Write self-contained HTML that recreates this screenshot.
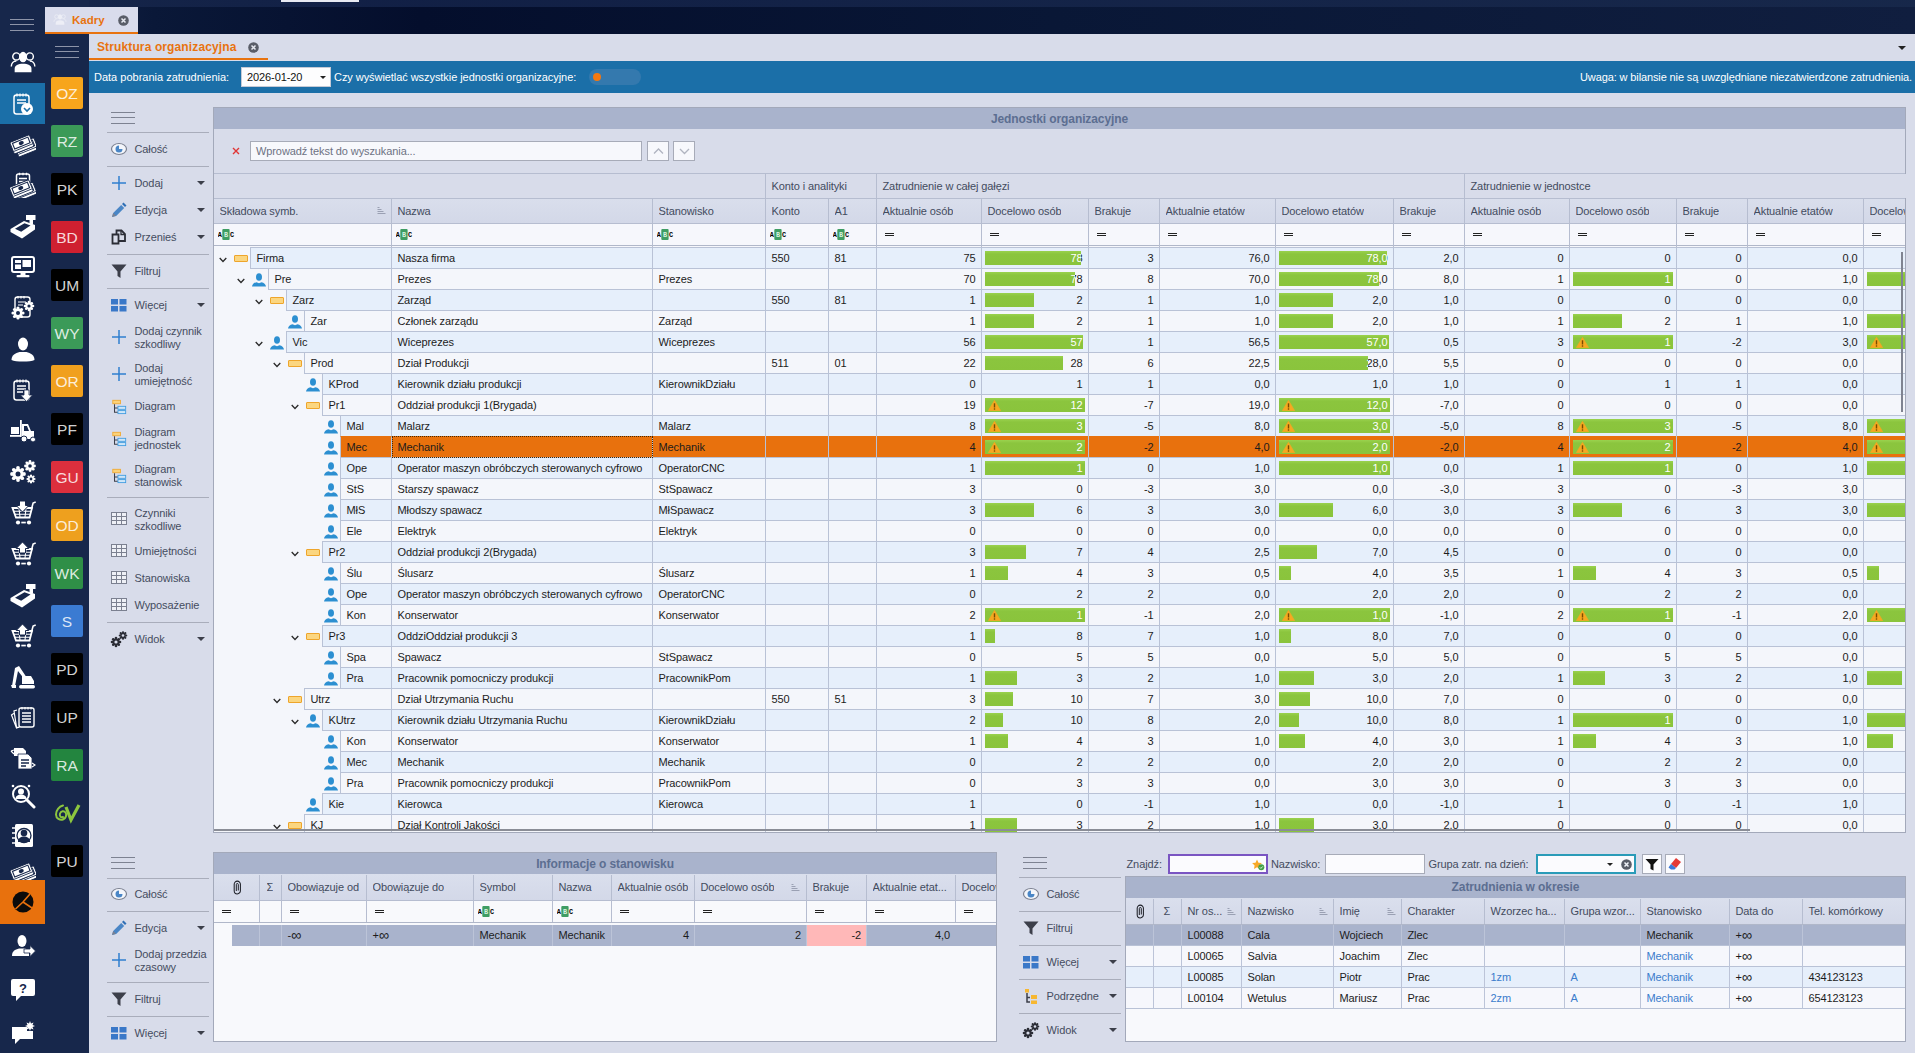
<!DOCTYPE html>
<html lang="pl"><head><meta charset="utf-8"><title>Struktura organizacyjna</title>
<style>
*{box-sizing:border-box;margin:0;padding:0}
html,body{width:1915px;height:1053px;overflow:hidden}
body{position:relative;background:#d8dcea;font-family:"Liberation Sans",sans-serif;font-size:11px;color:#1c1c1c;line-height:13px;letter-spacing:-0.1px}
.a{position:absolute}
.t{position:absolute;white-space:nowrap;line-height:13px}
.nav{background:#17274b}
.sq{position:absolute;left:51px;width:32px;height:32px;border-radius:2px;color:#fff;font-size:15.500px;line-height:34px;text-align:center;color:rgba(255,255,255,.84);letter-spacing:0}
.ico{position:absolute;left:10px;width:26px;height:26px}
.sep{position:absolute;height:1px;background:#a9adbb}
.tb{position:absolute;white-space:nowrap;color:#454c60;line-height:13px}
.hl{position:absolute;height:1px;background:#7d8291}
.arr{position:absolute;width:0;height:0;border-left:4px solid transparent;border-right:4px solid transparent;border-top:4px solid #3c3f4a}
.hdr{position:absolute;color:#434b5e;white-space:nowrap;line-height:13px}
.vl{position:absolute;width:1px;background:#b6bdd0}
.hz{position:absolute;height:1px;background:#b6bdd0}
.row{position:absolute;left:0;height:21px}
.c{position:absolute;top:0;height:21px;line-height:20px;white-space:nowrap;overflow:hidden;border-right:1px solid #b9c2d6;border-bottom:1px solid #b9c2d6}
.r{text-align:right;padding-right:5.500px}
.l{padding-left:5px}
.bar{position:absolute;top:3px;height:14px;background:linear-gradient(#9ad24e,#8bc53e 22%,#8ac43c);overflow:hidden}
.bar span{position:absolute;top:-3px;color:#fff;text-align:right;line-height:20px}
.o{background:#e6effb}
.e{background:#f4f6fb}
.sel{background:#e8710d}
.title{position:absolute;background:#a9b3cc;color:#5c6e91;font-weight:bold;text-align:center;font-size:12px;line-height:22px;height:21px}
.eq{position:absolute;width:9px;height:3px;border-top:1px solid #222;border-bottom:1px solid #222}
.lnk{color:#3b7ccc}
</style></head>
<body>
<div class="a" style="left:0;top:0;width:1915px;height:34px;background:linear-gradient(90deg,#17274b 0,#0a1838 8%,#040e2c 22%,#091736 55%,#101e3f 100%)"></div>
<div class="a" style="left:0;top:0;width:1915px;height:7px;background:linear-gradient(90deg,#17274b 0,#14234a 20%,#18294c 100%);opacity:.85"></div>
<div class="a" style="left:281px;top:0;width:78px;height:2px;background:#e8eaf2"></div>
<div class="a nav" style="left:0;top:0;width:89px;height:1053px"></div>
<div class="a" style="left:10px;top:19px;width:24px;height:1px;background:#8d94a8"></div>
<div class="a" style="left:10px;top:24.25px;width:24px;height:1px;background:#8d94a8"></div>
<div class="a" style="left:10px;top:29.5px;width:24px;height:1px;background:#8d94a8"></div>
<div class="a" style="left:55px;top:46px;width:24px;height:1px;background:#8d94a8"></div>
<div class="a" style="left:55px;top:51.25px;width:24px;height:1px;background:#8d94a8"></div>
<div class="a" style="left:55px;top:56.5px;width:24px;height:1px;background:#8d94a8"></div>
<div class="a" style="left:0;top:83px;width:45px;height:41px;background:#1b6fa8"></div>
<svg class="ico" style="top:49px" viewBox="0 0 26 26"><g transform="translate(-1.500,-1.500) scale(1.120)"><circle cx="7" cy="8" r="3.2" fill="none" stroke="#fff" stroke-width="1.3"/><circle cx="19" cy="8" r="3.2" fill="none" stroke="#fff" stroke-width="1.3"/><path d="M2.5 17c0-3 2-5 4.5-5M23.5 17c0-3-2-5-4.5-5" fill="none" stroke="#fff" stroke-width="1.3"/><ellipse cx="13" cy="8.5" rx="3.6" ry="4.6" fill="#fff"/><path d="M5.5 22v-3c0-3 3-4.5 7.500-4.500s7.500 1.500 7.500 4.500v3z" fill="#fff"/></g></svg>
<svg class="ico" style="top:91px" viewBox="0 0 26 26"><rect x="4" y="4" width="15" height="19" rx="2.500" fill="none" stroke="#fff" stroke-width="1.5"/><path d="M7 2.500v3M10 2.500v3M13 2.500v3M16 2.500v3" stroke="#fff" stroke-width="1.2"/><path d="M7 9h9M7 12h9" stroke="#fff" stroke-width="1.5"/><circle cx="17" cy="18" r="6" fill="#fff"/><path d="M14 17l3 3 3-3" fill="none" stroke="#1b6fa8" stroke-width="1.600"/></svg>
<svg class="ico" style="top:131px" viewBox="0 0 26 26"><g transform="translate(0,0)"><g transform="translate(4.5,3.5) rotate(-22 12 12)"><rect x="1" y="6.500" width="21" height="12.500" rx="1" fill="#fff" stroke="#17274b" stroke-width=".9"/><rect x="3.200" y="8.300" width="16.600" height="6" fill="none" stroke="#17274b" stroke-width="1.100"/><ellipse cx="11.500" cy="11.300" rx="2.600" ry="1.900" fill="#17274b"/><path d="M1.500 16.300h20" stroke="#17274b" stroke-width=".8"/></g><g transform="translate(0,0.5) rotate(-22 12 12)"><rect x="1" y="6.500" width="21" height="12.500" rx="1" fill="#fff" stroke="#17274b" stroke-width=".9"/><rect x="3.200" y="8.300" width="16.600" height="6" fill="none" stroke="#17274b" stroke-width="1.100"/><ellipse cx="11.500" cy="11.300" rx="2.600" ry="1.900" fill="#17274b"/><path d="M1.500 16.300h20" stroke="#17274b" stroke-width=".8"/></g></g></svg>
<svg class="ico" style="top:172px" viewBox="0 0 26 26"><rect x="6.500" y="2" width="13" height="12" rx="2" fill="none" stroke="#fff" stroke-width="1.500"/><path d="M9.500 0.800v2.500M13 0.800v2.500M16.500 0.800v2.500M9 6.500h8M9 9.500h8" stroke="#fff" stroke-width="1.300"/><g transform="translate(3.5,7) rotate(-22 12 12)"><rect x="1" y="6.500" width="21" height="12.500" rx="1" fill="#fff" stroke="#17274b" stroke-width=".9"/><rect x="3.200" y="8.300" width="16.600" height="6" fill="none" stroke="#17274b" stroke-width="1.100"/><ellipse cx="11.500" cy="11.300" rx="2.600" ry="1.900" fill="#17274b"/><path d="M1.500 16.300h20" stroke="#17274b" stroke-width=".8"/></g><g transform="translate(-0.5,4.5) rotate(-22 12 12)"><rect x="1" y="6.500" width="21" height="12.500" rx="1" fill="#fff" stroke="#17274b" stroke-width=".9"/><rect x="3.200" y="8.300" width="16.600" height="6" fill="none" stroke="#17274b" stroke-width="1.100"/><ellipse cx="11.500" cy="11.300" rx="2.600" ry="1.900" fill="#17274b"/><path d="M1.500 16.300h20" stroke="#17274b" stroke-width=".8"/></g></svg>
<svg class="ico" style="top:213px" viewBox="0 0 26 26"><path d="M0.500 16l13.500-8 11 4v4.500l-13 9-11.500-6.500z" fill="#fff"/><path d="M5 15.800l9.500-5.500 6 2.300-9.300 6.200z" fill="#17274b"/><rect x="16" y="2" width="9.500" height="5" fill="#fff"/><rect x="19.500" y="6" width="3.500" height="5.500" fill="#fff"/></svg>
<svg class="ico" style="top:254px" viewBox="0 0 26 26"><rect x="2" y="3" width="22" height="15" rx="2" fill="#17274b" stroke="#fff" stroke-width="2"/><rect x="5" y="6" width="6" height="3" fill="#fff"/><rect x="5" y="10.500" width="6" height="4.500" fill="#fff"/><rect x="12.500" y="6" width="8.500" height="7" fill="#fff"/><rect x="10.500" y="18.500" width="5" height="3" fill="#fff"/><rect x="6.500" y="21" width="13" height="2.200" rx="1" fill="#fff"/></svg>
<svg class="ico" style="top:295px" viewBox="0 0 26 26"><rect x="5" y="2" width="15" height="20" rx="2.500" fill="none" stroke="#fff" stroke-width="1.4"/><path d="M8 1v2.500M11 1v2.500M14 1v2.500M8 7h8M8 10h5" stroke="#fff" stroke-width="1.2"/><circle cx="13.0" cy="18.0" r="1.6" fill="#fff"/><circle cx="11.5" cy="21.5" r="1.6" fill="#fff"/><circle cx="8.0" cy="23.0" r="1.6" fill="#fff"/><circle cx="4.5" cy="21.5" r="1.6" fill="#fff"/><circle cx="3.0" cy="18.0" r="1.6" fill="#fff"/><circle cx="4.5" cy="14.5" r="1.6" fill="#fff"/><circle cx="8.0" cy="13.0" r="1.6" fill="#fff"/><circle cx="11.5" cy="14.5" r="1.6" fill="#fff"/><circle cx="8" cy="18" r="4.5" fill="#fff"/><circle cx="8" cy="18" r="2" fill="#17274b"/><circle cx="23.0" cy="11.0" r="1.3" fill="#fff"/><circle cx="21.8" cy="13.8" r="1.3" fill="#fff"/><circle cx="19.0" cy="15.0" r="1.3" fill="#fff"/><circle cx="16.2" cy="13.8" r="1.3" fill="#fff"/><circle cx="15.0" cy="11.0" r="1.3" fill="#fff"/><circle cx="16.2" cy="8.2" r="1.3" fill="#fff"/><circle cx="19.0" cy="7.0" r="1.3" fill="#fff"/><circle cx="21.8" cy="8.2" r="1.3" fill="#fff"/><circle cx="19" cy="11" r="3.6" fill="#fff"/><circle cx="19" cy="11" r="1.6" fill="#17274b"/></svg>
<svg class="ico" style="top:336px" viewBox="0 0 26 26"><ellipse cx="13" cy="8" rx="5" ry="6.500" fill="#fff"/><path d="M1.500 24c0-5 4-7 8-8h7c4 1 8 3 8 8-4 2-19 2-23 0z" fill="#fff"/></svg>
<svg class="ico" style="top:377px" viewBox="0 0 26 26"><rect x="4" y="4" width="15" height="19" rx="2.500" fill="none" stroke="#fff" stroke-width="1.5"/><path d="M7 2.500v3M10 2.500v3M13 2.500v3M16 2.500v3" stroke="#fff" stroke-width="1.2"/><path d="M7 9h9M7 12h9" stroke="#fff" stroke-width="1.5"/><path d="M7 15h6" stroke="#fff" stroke-width="1.500"/><path d="M14 13h5v5h3.500l-6 6.500-6-6.500h3.500z" fill="#fff" stroke="#17274b" stroke-width=".8"/></svg>
<svg class="ico" style="top:418px" viewBox="0 0 26 26"><rect x="1" y="9" width="8" height="7" fill="#fff"/><rect x="0" y="17" width="11" height="1.800" fill="#fff"/><rect x="10" y="2" width="1.800" height="17" fill="#fff"/><path d="M12 6h6l3 7h3v8h-12z" fill="#fff"/><path d="M14 8h3l2 5h-5z" fill="#17274b"/><circle cx="14" cy="21" r="3" fill="#fff" stroke="#17274b"/><circle cx="23" cy="21.500" r="2.500" fill="#fff" stroke="#17274b"/></svg>
<svg class="ico" style="top:459px" viewBox="0 0 26 26"><circle cx="14.0" cy="15.0" r="1.9" fill="#fff"/><circle cx="12.2" cy="19.2" r="1.9" fill="#fff"/><circle cx="8.0" cy="21.0" r="1.9" fill="#fff"/><circle cx="3.8" cy="19.2" r="1.9" fill="#fff"/><circle cx="2.0" cy="15.0" r="1.9" fill="#fff"/><circle cx="3.8" cy="10.8" r="1.9" fill="#fff"/><circle cx="8.0" cy="9.0" r="1.9" fill="#fff"/><circle cx="12.2" cy="10.8" r="1.9" fill="#fff"/><circle cx="8" cy="15" r="5.4" fill="#fff"/><circle cx="8" cy="15" r="2.5" fill="#17274b"/><circle cx="24.5" cy="7.0" r="1.4" fill="#fff"/><circle cx="23.2" cy="10.2" r="1.4" fill="#fff"/><circle cx="20.0" cy="11.5" r="1.4" fill="#fff"/><circle cx="16.8" cy="10.2" r="1.4" fill="#fff"/><circle cx="15.5" cy="7.0" r="1.4" fill="#fff"/><circle cx="16.8" cy="3.8" r="1.4" fill="#fff"/><circle cx="20.0" cy="2.5" r="1.4" fill="#fff"/><circle cx="23.2" cy="3.8" r="1.4" fill="#fff"/><circle cx="20" cy="7" r="4.0" fill="#fff"/><circle cx="20" cy="7" r="1.8" fill="#17274b"/><circle cx="24.5" cy="20.0" r="1.1" fill="#fff"/><circle cx="23.5" cy="22.5" r="1.1" fill="#fff"/><circle cx="21.0" cy="23.5" r="1.1" fill="#fff"/><circle cx="18.5" cy="22.5" r="1.1" fill="#fff"/><circle cx="17.5" cy="20.0" r="1.1" fill="#fff"/><circle cx="18.5" cy="17.5" r="1.1" fill="#fff"/><circle cx="21.0" cy="16.5" r="1.1" fill="#fff"/><circle cx="23.5" cy="17.5" r="1.1" fill="#fff"/><circle cx="21" cy="20" r="3.1" fill="#fff"/><circle cx="21" cy="20" r="1.4" fill="#17274b"/></svg>
<svg class="ico" style="top:500px" viewBox="0 0 26 26"><path d="M2.500 8h19.500l-2.500 9.500h-13.500z" fill="none" stroke="#fff" stroke-width="1.800"/><path d="M21.500 9l1.600-6 2.600-1" stroke="#fff" stroke-width="1.600" fill="none"/><path d="M3.500 11.200h17.500M4.500 14.300h15.500M9 8.500l1 8.500M16 8.500l-1 8.500" stroke="#fff" stroke-width="1.100"/><path d="M9.500 1h6v4.500h3.300l-6.300 6.500-6.300-6.500h3.300z" fill="#fff" stroke="#17274b" stroke-width="1"/><circle cx="8" cy="22.500" r="2.100" fill="#fff"/><circle cx="19" cy="22.500" r="2.100" fill="#fff"/><rect x="11.300" y="21.700" width="4.500" height="1.700" fill="#fff"/></svg>
<svg class="ico" style="top:541px" viewBox="0 0 26 26"><path d="M2.500 8h19.500l-2.500 9.500h-13.500z" fill="none" stroke="#fff" stroke-width="1.800"/><path d="M21.500 9l1.600-6 2.600-1" stroke="#fff" stroke-width="1.600" fill="none"/><path d="M3.500 11.200h17.500M4.500 14.300h15.500M9 8.500l1 8.500M16 8.500l-1 8.500" stroke="#fff" stroke-width="1.100"/><path d="M12.500 1l6.300 6.500h-3.300v4.500h-6v-4.500h-3.300z" fill="#fff" stroke="#17274b" stroke-width="1"/><circle cx="8" cy="22.500" r="2.100" fill="#fff"/><circle cx="19" cy="22.500" r="2.100" fill="#fff"/><rect x="11.300" y="21.700" width="4.500" height="1.700" fill="#fff"/></svg>
<svg class="ico" style="top:582px" viewBox="0 0 26 26"><path d="M0.500 16l13.500-8 11 4v4.500l-13 9-11.500-6.500z" fill="#fff"/><path d="M5 15.800l9.500-5.500 6 2.300-9.300 6.200z" fill="#17274b"/><rect x="16" y="2" width="9.500" height="5" fill="#fff"/><rect x="19.500" y="6" width="3.500" height="5.500" fill="#fff"/></svg>
<svg class="ico" style="top:623px" viewBox="0 0 26 26"><path d="M2.500 8h19.500l-2.500 9.500h-13.500z" fill="none" stroke="#fff" stroke-width="1.800"/><path d="M21.500 9l1.600-6 2.600-1" stroke="#fff" stroke-width="1.600" fill="none"/><path d="M3.500 11.200h17.500M4.500 14.300h15.500M9 8.500l1 8.500M16 8.500l-1 8.500" stroke="#fff" stroke-width="1.100"/><path d="M12.500 1l6.300 6.500h-3.300v4.500h-6v-4.500h-3.300z" fill="#fff" stroke="#17274b" stroke-width="1"/><circle cx="8" cy="22.500" r="2.100" fill="#fff"/><circle cx="19" cy="22.500" r="2.100" fill="#fff"/><rect x="11.300" y="21.700" width="4.500" height="1.700" fill="#fff"/></svg>
<svg class="ico" style="top:664px" viewBox="0 0 26 26"><path d="M2 22l3-18 4-2 8 12-2 2-7-9-3 15z" fill="#fff"/><path d="M12 12h9l3 5v3h-12z" fill="#fff"/><rect x="9" y="21" width="16" height="3.500" rx="1.700" fill="#fff"/><path d="M1 21h5v3h-4z" fill="#fff"/></svg>
<svg class="ico" style="top:705px" viewBox="0 0 26 26"><rect x="9" y="3" width="15" height="19" rx="2" fill="#17274b" stroke="#fff" stroke-width="1.400"/><path d="M12 8h9M12 11h9M12 14h9M12 17h9" stroke="#fff" stroke-width="1.400"/><path d="M12 2v2.500M15 2v2.500M18 2v2.500M21 2v2.500" stroke="#fff" stroke-width="1.100"/><path d="M7 5l-3 1 2.500 16 3 .500M4.500 8l-3 2 5 13 3-1" fill="none" stroke="#fff" stroke-width="1.200"/></svg>
<svg class="ico" style="top:746px" viewBox="0 0 26 26"><path d="M4 2h9l3 3v5h-12z" fill="#fff"/><path d="M8 8h10l4 4v11h-14z" fill="#fff" stroke="#17274b" stroke-width=".8"/><path d="M11 14h8M11 17h8M11 20h5" stroke="#17274b" stroke-width="1.300"/><path d="M1 5l3 3M1 5l3-1" stroke="#fff" stroke-width="1.200"/><path d="M22 21l3-2-3-2" fill="none" stroke="#fff" stroke-width="1.200"/></svg>
<svg class="ico" style="top:784px" viewBox="0 0 26 26"><circle cx="11" cy="10" r="8" fill="none" stroke="#fff" stroke-width="2"/><circle cx="11" cy="7.500" r="3" fill="#fff"/><path d="M5.500 15c0-3 2.500-4.500 5.500-4.500s5.500 1.500 5.500 4.500z" fill="#fff"/><path d="M17 16l7 7" stroke="#fff" stroke-width="3" stroke-linecap="round"/><circle cx="3" cy="2" r="1.300" fill="#fff"/><circle cx="19" cy="2" r="1.300" fill="#fff"/></svg>
<svg class="ico" style="top:823px" viewBox="0 0 26 26"><rect x="5" y="1" width="18" height="23" rx="1.500" fill="#fff"/><circle cx="14" cy="10" r="3.300" fill="#17274b"/><path d="M8 19c0-4 3-5.500 6-5.500s6 1.500 6 5.500z" fill="#17274b"/><circle cx="14" cy="12.500" r="7" fill="none" stroke="#17274b" stroke-width="1.300"/><path d="M2 5h4M2 10h4M2 15h4M2 20h4" stroke="#fff" stroke-width="1.600"/></svg>
<svg class="ico" style="top:859px" viewBox="0 0 26 26"><g transform="translate(0,0)"><g transform="translate(4.5,3.5) rotate(-22 12 12)"><rect x="1" y="6.500" width="21" height="12.500" rx="1" fill="#fff" stroke="#17274b" stroke-width=".9"/><rect x="3.200" y="8.300" width="16.600" height="6" fill="none" stroke="#17274b" stroke-width="1.100"/><ellipse cx="11.500" cy="11.300" rx="2.600" ry="1.900" fill="#17274b"/><path d="M1.500 16.300h20" stroke="#17274b" stroke-width=".8"/></g><g transform="translate(0,0.5) rotate(-22 12 12)"><rect x="1" y="6.500" width="21" height="12.500" rx="1" fill="#fff" stroke="#17274b" stroke-width=".9"/><rect x="3.200" y="8.300" width="16.600" height="6" fill="none" stroke="#17274b" stroke-width="1.100"/><ellipse cx="11.500" cy="11.300" rx="2.600" ry="1.900" fill="#17274b"/><path d="M1.500 16.300h20" stroke="#17274b" stroke-width=".8"/></g></g></svg>
<div class="a" style="left:0;top:880px;width:45px;height:44px;background:#e8710d"></div>
<svg class="ico" style="top:889px" viewBox="0 0 26 26"><circle cx="13" cy="13" r="10.500" fill="#0b0b0b"/><path d="M13 13L20 5M13 13L22 19M13 13L5.500 20" stroke="#e8710d" stroke-width="1.600"/></svg>
<svg class="ico" style="top:934px" viewBox="0 0 26 26"><ellipse cx="12" cy="7" rx="4.500" ry="6" fill="#fff"/><path d="M2 22c0-5 3-6.500 7-7.500h6c2 .5 3 1 4 2v5.500z" fill="#fff"/><path d="M14 15h6v-3.500l5.500 5.500-5.500 5.500v-3.500h-6z" fill="#fff" stroke="#17274b" stroke-width=".8"/></svg>
<svg class="ico" style="top:977px" viewBox="0 0 26 26"><path d="M3 2h20a2 2 0 0 1 2 2v13a2 2 0 0 1-2 2h-12l-5 5v-5h-3a2 2 0 0 1-2-2v-13a2 2 0 0 1 2-2z" fill="#fff"/><text x="13" y="15.500" font-family="Liberation Sans,sans-serif" font-size="13" font-weight="bold" fill="#17274b" text-anchor="middle">?</text></svg>
<svg class="ico" style="top:1021px" viewBox="0 0 26 26"><path d="M2 6h15v4h6v8h-13l-5 5v-5h-3z" fill="#fff"/><path d="M20 0l1 2.500 2.500-1-1 2.500 2.500 1-2.500 1 1 2.500-2.500-1-1 2.500-1-2.500-2.500 1 1-2.500-2.500-1 2.500-1-1-2.500 2.500 1z" fill="#fff"/></svg>
<div class="sq" style="top:77px;background:#f7a51c">OZ</div>
<div class="sq" style="top:125px;background:#3b9a58">RZ</div>
<div class="sq" style="top:173px;background:#000">PK</div>
<div class="sq" style="top:221px;background:#cf2030">BD</div>
<div class="sq" style="top:269px;background:#000">UM</div>
<div class="sq" style="top:317px;background:#3b9a58">WY</div>
<div class="sq" style="top:365px;background:#f0a01e">OR</div>
<div class="sq" style="top:413px;background:#000">PF</div>
<div class="sq" style="top:461px;background:#dc2f3d">GU</div>
<div class="sq" style="top:509px;background:#eea01e">OD</div>
<div class="sq" style="top:557px;background:#2f8f47">WK</div>
<div class="sq" style="top:605px;background:#3b7bd2">S</div>
<div class="sq" style="top:653px;background:#000">PD</div>
<div class="sq" style="top:701px;background:#000">UP</div>
<div class="sq" style="top:749px;background:#23853f">RA</div>
<svg class="a" style="left:51px;top:797px" width="32" height="32" viewBox="0 0 32 32"><path d="M12 20c-2 1-4-1-3-3.500s4-3 5.500-1 .5 6-2.500 7-7-1-7-5 3-8 7-9" fill="none" stroke="#8cc63f" stroke-width="2" stroke-linecap="round"/><path d="M15 10l5 13 8-15" fill="none" stroke="#8cc63f" stroke-width="3.200" stroke-linejoin="miter"/></svg>
<div class="sq" style="top:845px;background:#000">PU</div>
<div class="a" style="left:45px;top:7px;width:93px;height:27px;background:#d9dcec;border-bottom:2px solid #e8730f"></div>
<svg class="a" style="left:52px;top:12px" width="16" height="15" viewBox="0 0 26 26" opacity=".75"><circle cx="7" cy="8" r="3.2" fill="none" stroke="#f4f5fa" stroke-width="1.3"/><circle cx="19" cy="8" r="3.2" fill="none" stroke="#f4f5fa" stroke-width="1.3"/><path d="M2.5 17c0-3 2-5 4.5-5M23.5 17c0-3-2-5-4.5-5" fill="none" stroke="#f4f5fa" stroke-width="1.3"/><ellipse cx="13" cy="8.5" rx="3.6" ry="4.6" fill="#f4f5fa"/><path d="M5.5 22v-3c0-3 3-4.5 7.500-4.500s7.500 1.500 7.500 4.500v3z" fill="#f4f5fa"/></svg>
<div class="t" style="left:72px;top:14px;color:#e8730f;font-weight:bold;font-size:11.500px;letter-spacing:0">Kadry</div>
<svg class="a" style="left:117.5px;top:14.5px" width="11" height="11" viewBox="0 0 11 11"><circle cx="5.500" cy="5.500" r="5.300" fill="#595d68"/><path d="M3.500 3.500l4 4M7.500 3.500l-4 4" stroke="#e6e8f0" stroke-width="1.500"/></svg>
<div class="a" style="left:89px;top:34px;width:1826px;height:27px;background:#d8dcea"></div>
<div class="a" style="left:89px;top:58px;width:179px;height:2px;background:#e8730f"></div>
<div class="t" style="left:97px;top:41px;color:#e8730f;font-weight:bold;font-size:12px;letter-spacing:0.12px">Struktura organizacyjna</div>
<svg class="a" style="left:247.5px;top:41.5px" width="11" height="11" viewBox="0 0 11 11"><circle cx="5.500" cy="5.500" r="5.300" fill="#595d68"/><path d="M3.500 3.500l4 4M7.500 3.500l-4 4" stroke="#e6e8f0" stroke-width="1.500"/></svg>
<div class="arr" style="left:1898px;top:46px;border-top-color:#222"></div>
<div class="a" style="left:89px;top:61px;width:1826px;height:32px;background:#1b6fa8"></div>
<div class="t" style="left:94px;top:71px;color:#fff;letter-spacing:0">Data pobrania zatrudnienia:</div>
<div class="a" style="left:241px;top:67px;width:90px;height:20px;background:#fdfdfe;border:1px solid #c5cad6"></div>
<div class="t" style="left:247px;top:71px;color:#111">2026-01-20</div>
<div class="arr" style="left:319.500px;top:76px;border-width:3px 3.500px 0 3.500px;border-top-color:#222"></div>
<div class="t" style="left:334px;top:71px;color:#fff;letter-spacing:-0.06px">Czy wyświetlać wszystkie jednostki organizacyjne:</div>
<div class="a" style="left:589px;top:69px;width:52px;height:16px;border-radius:8px;background:#3479ae"></div>
<div class="a" style="left:593px;top:73px;width:8px;height:8px;border-radius:4px;background:#f5780f"></div>
<div class="t" style="right:3px;top:71px;color:#fff;letter-spacing:-0.12px">Uwaga: w bilansie nie są uwzględniane niezatwierdzone zatrudnienia.</div>
<div class="hl" style="left:111px;top:112px;width:24px"></div>
<div class="hl" style="left:111px;top:117.25px;width:24px"></div>
<div class="hl" style="left:111px;top:122.5px;width:24px"></div>
<div class="sep" style="left:107px;top:132px;width:102px"></div>
<svg class="a" style="left:109.5px;top:140.0px" width="18" height="18" viewBox="0 0 18 18"><ellipse cx="9" cy="9" rx="7.500" ry="5.500" fill="#f4f6fb" stroke="#7b8090" stroke-width="1.200"/><path d="M9 5.500a3.500 3.500 0 1 0 3.500 3.500h-3.500z" fill="#4a86c6"/></svg>
<div class="tb" style="left:134.5px;top:143px">Całość</div>
<div class="sep" style="left:107px;top:166px;width:102px"></div>
<svg class="a" style="left:109.5px;top:174.0px" width="18" height="18" viewBox="0 0 18 18"><path d="M9 2v14M2 9h14" stroke="#2f7fd0" stroke-width="1.500"/></svg>
<div class="tb" style="left:134.5px;top:177px">Dodaj</div>
<div class="arr" style="left:196.5px;top:181px"></div>
<svg class="a" style="left:109.5px;top:201.0px" width="18" height="18" viewBox="0 0 18 18"><path d="M2 16l1.200-4 8-8 3 3-8 8z" fill="#4a86c6"/><path d="M12 3l1.500-1.500 3 3-1.500 1.500z" fill="#2f6fb5"/><path d="M2 16l1.200-4 2.800 2.800z" fill="#7b8090"/></svg>
<div class="tb" style="left:134.5px;top:204px">Edycja</div>
<div class="arr" style="left:196.5px;top:208px"></div>
<svg class="a" style="left:109.5px;top:228.0px" width="18" height="18" viewBox="0 0 18 18"><path d="M6.500 2.500h5l3.500 3.500v7h-8.500z" fill="#d8dcea" stroke="#2b2d36" stroke-width="1.800"/><path d="M11 2.500v4h4" fill="none" stroke="#2b2d36" stroke-width="1.300"/><path d="M2.500 6.500h6v9h-6z" fill="#d8dcea" stroke="#2b2d36" stroke-width="1.800"/></svg>
<div class="tb" style="left:134.5px;top:231px">Przenieś</div>
<div class="arr" style="left:196.5px;top:235px"></div>
<div class="sep" style="left:107px;top:254px;width:102px"></div>
<svg class="a" style="left:109.5px;top:262.0px" width="18" height="18" viewBox="0 0 18 18"><path d="M1.500 2.500h15l-6 7v6.500l-3-2v-4.500z" fill="#3c3f4a"/></svg>
<div class="tb" style="left:134.5px;top:265px">Filtruj</div>
<div class="sep" style="left:107px;top:288px;width:102px"></div>
<svg class="a" style="left:109.5px;top:296.0px" width="18" height="18" viewBox="0 0 18 18"><rect x="1" y="3" width="7" height="5.500" fill="#3a78c8"/><rect x="9.500" y="3" width="7" height="5.500" fill="#3a78c8"/><rect x="1" y="10" width="7" height="5.500" fill="#3a78c8"/><rect x="9.500" y="10" width="7" height="5.500" fill="#3a78c8"/></svg>
<div class="tb" style="left:134.5px;top:299px">Więcej</div>
<div class="arr" style="left:196.5px;top:303px"></div>
<svg class="a" style="left:109.5px;top:327.5px" width="18" height="18" viewBox="0 0 18 18"><path d="M9 2v14M2 9h14" stroke="#2f7fd0" stroke-width="1.500"/></svg>
<div class="tb" style="left:134.5px;top:325.0px">Dodaj czynnik<br>szkodliwy</div>
<svg class="a" style="left:109.5px;top:364.5px" width="18" height="18" viewBox="0 0 18 18"><path d="M9 2v14M2 9h14" stroke="#2f7fd0" stroke-width="1.500"/></svg>
<div class="tb" style="left:134.5px;top:362.0px">Dodaj<br>umiejętność</div>
<svg class="a" style="left:109.5px;top:397.0px" width="18" height="18" viewBox="0 0 18 18"><g transform="translate(1.500,2) scale(0.860)"><rect x="1.500" y="1.500" width="9" height="4" fill="#fbd27a" stroke="#f0a830"/><path d="M3.500 6v9.500h4M3.500 10.500h4" fill="none" stroke="#3c3f4a" stroke-width="1.200"/><rect x="7.500" y="8.500" width="9" height="3.500" fill="#cfe6f8" stroke="#3c9be0"/><rect x="7.500" y="13.500" width="9" height="3.500" fill="#cfe6f8" stroke="#3c9be0"/></g></svg>
<div class="tb" style="left:134.5px;top:400px">Diagram</div>
<svg class="a" style="left:109.5px;top:428.5px" width="18" height="18" viewBox="0 0 18 18"><g transform="translate(1.500,2) scale(0.860)"><rect x="1.500" y="1.500" width="9" height="4" fill="#fbd27a" stroke="#f0a830"/><path d="M3.500 6v9.500h4M3.500 10.500h4" fill="none" stroke="#3c3f4a" stroke-width="1.200"/><rect x="7.500" y="8.500" width="9" height="3.500" fill="#cfe6f8" stroke="#3c9be0"/><rect x="7.500" y="13.500" width="9" height="3.500" fill="#cfe6f8" stroke="#3c9be0"/></g></svg>
<div class="tb" style="left:134.5px;top:426.0px">Diagram<br>jednostek</div>
<svg class="a" style="left:109.5px;top:465.5px" width="18" height="18" viewBox="0 0 18 18"><g transform="translate(1.500,2) scale(0.860)"><rect x="1.500" y="1.500" width="9" height="4" fill="#fbd27a" stroke="#f0a830"/><path d="M3.500 6v9.500h4M3.500 10.500h4" fill="none" stroke="#3c3f4a" stroke-width="1.200"/><rect x="7.500" y="8.500" width="9" height="3.500" fill="#cfe6f8" stroke="#3c9be0"/><rect x="7.500" y="13.500" width="9" height="3.500" fill="#cfe6f8" stroke="#3c9be0"/></g></svg>
<div class="tb" style="left:134.5px;top:463.0px">Diagram<br>stanowisk</div>
<div class="sep" style="left:107px;top:497px;width:102px"></div>
<svg class="a" style="left:109.5px;top:509.5px" width="18" height="18" viewBox="0 0 18 18"><rect x="1.500" y="2.500" width="15" height="12" fill="#eef0f6" stroke="#7b8090"/><path d="M1.500 6.500h15M1.500 10.500h15M6.500 2.500v12M11.500 2.500v12" stroke="#7b8090"/></svg>
<div class="tb" style="left:134.5px;top:507.0px">Czynniki<br>szkodliwe</div>
<svg class="a" style="left:109.5px;top:542.0px" width="18" height="18" viewBox="0 0 18 18"><rect x="1.500" y="2.500" width="15" height="12" fill="#eef0f6" stroke="#7b8090"/><path d="M1.500 6.500h15M1.500 10.500h15M6.500 2.500v12M11.500 2.500v12" stroke="#7b8090"/></svg>
<div class="tb" style="left:134.5px;top:545px">Umiejętności</div>
<svg class="a" style="left:109.5px;top:569.0px" width="18" height="18" viewBox="0 0 18 18"><rect x="1.500" y="2.500" width="15" height="12" fill="#eef0f6" stroke="#7b8090"/><path d="M1.500 6.500h15M1.500 10.500h15M6.500 2.500v12M11.500 2.500v12" stroke="#7b8090"/></svg>
<div class="tb" style="left:134.5px;top:572px">Stanowiska</div>
<svg class="a" style="left:109.5px;top:596.0px" width="18" height="18" viewBox="0 0 18 18"><rect x="1.500" y="2.500" width="15" height="12" fill="#eef0f6" stroke="#7b8090"/><path d="M1.500 6.500h15M1.500 10.500h15M6.500 2.500v12M11.500 2.500v12" stroke="#7b8090"/></svg>
<div class="tb" style="left:134.5px;top:599px">Wyposażenie</div>
<div class="sep" style="left:107px;top:622px;width:102px"></div>
<svg class="a" style="left:109.5px;top:630.0px" width="18" height="18" viewBox="0 0 18 18"><circle cx="10.0" cy="12.0" r="1.3" fill="#2b2d36"/><circle cx="8.8" cy="14.8" r="1.3" fill="#2b2d36"/><circle cx="6.0" cy="16.0" r="1.3" fill="#2b2d36"/><circle cx="3.2" cy="14.8" r="1.3" fill="#2b2d36"/><circle cx="2.0" cy="12.0" r="1.3" fill="#2b2d36"/><circle cx="3.2" cy="9.2" r="1.3" fill="#2b2d36"/><circle cx="6.0" cy="8.0" r="1.3" fill="#2b2d36"/><circle cx="8.8" cy="9.2" r="1.3" fill="#2b2d36"/><circle cx="6" cy="12" r="3.6" fill="#2b2d36"/><circle cx="6" cy="12" r="1.6" fill="#d8dcea"/><circle cx="16.2" cy="5.5" r="1.1" fill="#2b2d36"/><circle cx="15.3" cy="7.8" r="1.1" fill="#2b2d36"/><circle cx="13.0" cy="8.7" r="1.1" fill="#2b2d36"/><circle cx="10.7" cy="7.8" r="1.1" fill="#2b2d36"/><circle cx="9.8" cy="5.5" r="1.1" fill="#2b2d36"/><circle cx="10.7" cy="3.2" r="1.1" fill="#2b2d36"/><circle cx="13.0" cy="2.3" r="1.1" fill="#2b2d36"/><circle cx="15.3" cy="3.2" r="1.1" fill="#2b2d36"/><circle cx="13" cy="5.5" r="2.9" fill="#2b2d36"/><circle cx="13" cy="5.5" r="1.3" fill="#d8dcea"/></svg>
<div class="tb" style="left:134.5px;top:633px">Widok</div>
<div class="arr" style="left:196.5px;top:637px"></div>
<div class="hl" style="left:111px;top:857px;width:24px"></div>
<div class="hl" style="left:111px;top:862.25px;width:24px"></div>
<div class="hl" style="left:111px;top:867.5px;width:24px"></div>
<div class="sep" style="left:107px;top:878px;width:102px"></div>
<svg class="a" style="left:109.5px;top:885.0px" width="18" height="18" viewBox="0 0 18 18"><ellipse cx="9" cy="9" rx="7.500" ry="5.500" fill="#f4f6fb" stroke="#7b8090" stroke-width="1.200"/><path d="M9 5.500a3.500 3.500 0 1 0 3.500 3.500h-3.500z" fill="#4a86c6"/></svg>
<div class="tb" style="left:134.5px;top:888px">Całość</div>
<div class="sep" style="left:107px;top:911px;width:102px"></div>
<svg class="a" style="left:109.5px;top:919.0px" width="18" height="18" viewBox="0 0 18 18"><path d="M2 16l1.200-4 8-8 3 3-8 8z" fill="#4a86c6"/><path d="M12 3l1.500-1.500 3 3-1.500 1.500z" fill="#2f6fb5"/><path d="M2 16l1.200-4 2.800 2.800z" fill="#7b8090"/></svg>
<div class="tb" style="left:134.5px;top:922px">Edycja</div>
<div class="arr" style="left:196.5px;top:926px"></div>
<svg class="a" style="left:109.5px;top:950.5px" width="18" height="18" viewBox="0 0 18 18"><path d="M9 2v14M2 9h14" stroke="#2f7fd0" stroke-width="1.500"/></svg>
<div class="tb" style="left:134.5px;top:948.0px">Dodaj przedzia<br>czasowy</div>
<div class="sep" style="left:107px;top:982px;width:102px"></div>
<svg class="a" style="left:109.5px;top:990.0px" width="18" height="18" viewBox="0 0 18 18"><path d="M1.500 2.500h15l-6 7v6.500l-3-2v-4.500z" fill="#3c3f4a"/></svg>
<div class="tb" style="left:134.5px;top:993px">Filtruj</div>
<div class="sep" style="left:107px;top:1016px;width:102px"></div>
<svg class="a" style="left:109.5px;top:1024.0px" width="18" height="18" viewBox="0 0 18 18"><rect x="1" y="3" width="7" height="5.500" fill="#3a78c8"/><rect x="9.500" y="3" width="7" height="5.500" fill="#3a78c8"/><rect x="1" y="10" width="7" height="5.500" fill="#3a78c8"/><rect x="9.500" y="10" width="7" height="5.500" fill="#3a78c8"/></svg>
<div class="tb" style="left:134.5px;top:1027px">Więcej</div>
<div class="arr" style="left:196.5px;top:1031px"></div>
<div class="hl" style="left:1023px;top:857px;width:24px"></div>
<div class="hl" style="left:1023px;top:862.25px;width:24px"></div>
<div class="hl" style="left:1023px;top:867.5px;width:24px"></div>
<div class="sep" style="left:1019px;top:877px;width:102px"></div>
<svg class="a" style="left:1021.5px;top:885.0px" width="18" height="18" viewBox="0 0 18 18"><ellipse cx="9" cy="9" rx="7.500" ry="5.500" fill="#f4f6fb" stroke="#7b8090" stroke-width="1.200"/><path d="M9 5.500a3.500 3.500 0 1 0 3.500 3.500h-3.500z" fill="#4a86c6"/></svg>
<div class="tb" style="left:1046.5px;top:888px">Całość</div>
<div class="sep" style="left:1019px;top:911px;width:102px"></div>
<svg class="a" style="left:1021.5px;top:919.0px" width="18" height="18" viewBox="0 0 18 18"><path d="M1.500 2.500h15l-6 7v6.500l-3-2v-4.500z" fill="#3c3f4a"/></svg>
<div class="tb" style="left:1046.5px;top:922px">Filtruj</div>
<div class="sep" style="left:1019px;top:945px;width:102px"></div>
<svg class="a" style="left:1021.5px;top:953.0px" width="18" height="18" viewBox="0 0 18 18"><rect x="1" y="3" width="7" height="5.500" fill="#3a78c8"/><rect x="9.500" y="3" width="7" height="5.500" fill="#3a78c8"/><rect x="1" y="10" width="7" height="5.500" fill="#3a78c8"/><rect x="9.500" y="10" width="7" height="5.500" fill="#3a78c8"/></svg>
<div class="tb" style="left:1046.5px;top:956px">Więcej</div>
<div class="arr" style="left:1108.5px;top:960px"></div>
<div class="sep" style="left:1019px;top:979px;width:102px"></div>
<svg class="a" style="left:1021.5px;top:987.0px" width="18" height="18" viewBox="0 0 18 18"><rect x="3" y="2" width="4" height="3.500" fill="#f7b731"/><path d="M5 6v9h3M5 10.500h3" fill="none" stroke="#3c3f4a" stroke-width="1.500"/><rect x="9" y="8" width="6" height="4" fill="#f7b731"/><rect x="9" y="13.500" width="6" height="3.500" fill="#f7b731"/></svg>
<div class="tb" style="left:1046.5px;top:990px">Podrzędne</div>
<div class="arr" style="left:1108.5px;top:994px"></div>
<div class="sep" style="left:1019px;top:1013px;width:102px"></div>
<svg class="a" style="left:1021.5px;top:1021.0px" width="18" height="18" viewBox="0 0 18 18"><circle cx="10.0" cy="12.0" r="1.3" fill="#2b2d36"/><circle cx="8.8" cy="14.8" r="1.3" fill="#2b2d36"/><circle cx="6.0" cy="16.0" r="1.3" fill="#2b2d36"/><circle cx="3.2" cy="14.8" r="1.3" fill="#2b2d36"/><circle cx="2.0" cy="12.0" r="1.3" fill="#2b2d36"/><circle cx="3.2" cy="9.2" r="1.3" fill="#2b2d36"/><circle cx="6.0" cy="8.0" r="1.3" fill="#2b2d36"/><circle cx="8.8" cy="9.2" r="1.3" fill="#2b2d36"/><circle cx="6" cy="12" r="3.6" fill="#2b2d36"/><circle cx="6" cy="12" r="1.6" fill="#d8dcea"/><circle cx="16.2" cy="5.5" r="1.1" fill="#2b2d36"/><circle cx="15.3" cy="7.8" r="1.1" fill="#2b2d36"/><circle cx="13.0" cy="8.7" r="1.1" fill="#2b2d36"/><circle cx="10.7" cy="7.8" r="1.1" fill="#2b2d36"/><circle cx="9.8" cy="5.5" r="1.1" fill="#2b2d36"/><circle cx="10.7" cy="3.2" r="1.1" fill="#2b2d36"/><circle cx="13.0" cy="2.3" r="1.1" fill="#2b2d36"/><circle cx="15.3" cy="3.2" r="1.1" fill="#2b2d36"/><circle cx="13" cy="5.5" r="2.9" fill="#2b2d36"/><circle cx="13" cy="5.5" r="1.3" fill="#d8dcea"/></svg>
<div class="tb" style="left:1046.5px;top:1024px">Widok</div>
<div class="arr" style="left:1108.5px;top:1028px"></div>
<div class="a" style="left:213px;top:107px;width:1693px;height:726px;border:1px solid #a3a9ba;background:#d8dcea"></div>
<div class="title" style="left:214px;top:108px;width:1691px;line-height:22px">Jednostki organizacyjne</div>
<div class="a" style="left:214px;top:129px;width:1691px;height:45px;border-bottom:1px solid #b6bdd0"></div>
<svg class="a" style="left:232px;top:147px" width="8" height="8" viewBox="0 0 8 8"><path d="M1 1l6 6M7 1l-6 6" stroke="#e03535" stroke-width="1.400"/></svg>
<div class="a" style="left:250px;top:141px;width:392px;height:20px;background:#f7f8fc;border:1px solid #a7abb8"></div>
<div class="t" style="left:256px;top:144.500px;color:#6d7283">Wprowadź tekst do wyszukania...</div>
<div class="a" style="left:647px;top:141px;width:22px;height:20px;background:#f7f8fc;border:1px solid #a7abb8"></div>
<svg class="a" style="left:652.5px;top:148px" width="11" height="7" viewBox="0 0 11 7"><path d="M1 5.500l4.500-4.500 4.500 4.500" fill="none" stroke="#b0b4c0" stroke-width="1.300"/></svg>
<div class="a" style="left:673px;top:141px;width:22px;height:20px;background:#f7f8fc;border:1px solid #a7abb8"></div>
<svg class="a" style="left:678.5px;top:148px" width="11" height="7" viewBox="0 0 11 7"><path d="M1 1l4.500 4.500 4.500-4.500" fill="none" stroke="#b0b4c0" stroke-width="1.300"/></svg>
<div class="a" style="left:1905px;top:174px;width:1px;height:24px;background:#d8dcea"></div>
<div class="a" style="left:214px;top:199px;width:1691px;height:24px;background:linear-gradient(#d9deec,#d3d8e8)"></div>
<div class="hz" style="left:214px;top:198px;width:1691px"></div>
<div class="hz" style="left:214px;top:223px;width:1691px"></div>
<div class="vl" style="left:765px;top:174px;height:24px"></div>
<div class="vl" style="left:876px;top:174px;height:24px"></div>
<div class="vl" style="left:1464px;top:174px;height:24px"></div>
<div class="hdr" style="left:771.500px;top:180px">Konto i analityki</div>
<div class="hdr" style="left:882.500px;top:180px">Zatrudnienie w całej gałęzi</div>
<div class="hdr" style="left:1470.500px;top:180px">Zatrudnienie w jednostce</div>
<div class="a" style="left:214px;top:224px;width:1691px;height:23px;background:#f6f7fc"></div>
<div class="hz" style="left:214px;top:245px;width:1691px;background:#b0b7c9"></div>
<div class="hdr" style="left:219.5px;top:204.500px;max-width:171.5px;overflow:hidden">Składowa symb.</div>
<div class="vl" style="left:391px;top:199px;height:49px"></div>
<svg class="a" style="left:218px;top:229px" width="17" height="11" viewBox="0 0 17 11"><rect x="4.300" y="0" width="7.300" height="11" rx="1" fill="#3f9d63"/><text x="-0.300" y="8" font-family="Liberation Mono,monospace" font-size="6.800" font-weight="bold" fill="#000" letter-spacing="0">A</text><text x="5.900" y="8" font-family="Liberation Mono,monospace" font-size="6.800" font-weight="bold" fill="#d5f0de" letter-spacing="0">B</text><text x="11.900" y="8" font-family="Liberation Mono,monospace" font-size="6.800" font-weight="bold" fill="#000" letter-spacing="0">C</text></svg>
<div class="hdr" style="left:397.5px;top:204.500px;max-width:254.5px;overflow:hidden">Nazwa</div>
<div class="vl" style="left:652px;top:199px;height:49px"></div>
<svg class="a" style="left:396px;top:229px" width="17" height="11" viewBox="0 0 17 11"><rect x="4.300" y="0" width="7.300" height="11" rx="1" fill="#3f9d63"/><text x="-0.300" y="8" font-family="Liberation Mono,monospace" font-size="6.800" font-weight="bold" fill="#000" letter-spacing="0">A</text><text x="5.900" y="8" font-family="Liberation Mono,monospace" font-size="6.800" font-weight="bold" fill="#d5f0de" letter-spacing="0">B</text><text x="11.900" y="8" font-family="Liberation Mono,monospace" font-size="6.800" font-weight="bold" fill="#000" letter-spacing="0">C</text></svg>
<div class="hdr" style="left:658.5px;top:204.500px;max-width:106.5px;overflow:hidden">Stanowisko</div>
<div class="vl" style="left:765px;top:199px;height:49px"></div>
<svg class="a" style="left:657px;top:229px" width="17" height="11" viewBox="0 0 17 11"><rect x="4.300" y="0" width="7.300" height="11" rx="1" fill="#3f9d63"/><text x="-0.300" y="8" font-family="Liberation Mono,monospace" font-size="6.800" font-weight="bold" fill="#000" letter-spacing="0">A</text><text x="5.900" y="8" font-family="Liberation Mono,monospace" font-size="6.800" font-weight="bold" fill="#d5f0de" letter-spacing="0">B</text><text x="11.900" y="8" font-family="Liberation Mono,monospace" font-size="6.800" font-weight="bold" fill="#000" letter-spacing="0">C</text></svg>
<div class="hdr" style="left:771.5px;top:204.500px;max-width:56.5px;overflow:hidden">Konto</div>
<div class="vl" style="left:828px;top:199px;height:49px"></div>
<svg class="a" style="left:770px;top:229px" width="17" height="11" viewBox="0 0 17 11"><rect x="4.300" y="0" width="7.300" height="11" rx="1" fill="#3f9d63"/><text x="-0.300" y="8" font-family="Liberation Mono,monospace" font-size="6.800" font-weight="bold" fill="#000" letter-spacing="0">A</text><text x="5.900" y="8" font-family="Liberation Mono,monospace" font-size="6.800" font-weight="bold" fill="#d5f0de" letter-spacing="0">B</text><text x="11.900" y="8" font-family="Liberation Mono,monospace" font-size="6.800" font-weight="bold" fill="#000" letter-spacing="0">C</text></svg>
<div class="hdr" style="left:834.5px;top:204.500px;max-width:41.5px;overflow:hidden">A1</div>
<div class="vl" style="left:876px;top:199px;height:49px"></div>
<svg class="a" style="left:833px;top:229px" width="17" height="11" viewBox="0 0 17 11"><rect x="4.300" y="0" width="7.300" height="11" rx="1" fill="#3f9d63"/><text x="-0.300" y="8" font-family="Liberation Mono,monospace" font-size="6.800" font-weight="bold" fill="#000" letter-spacing="0">A</text><text x="5.900" y="8" font-family="Liberation Mono,monospace" font-size="6.800" font-weight="bold" fill="#d5f0de" letter-spacing="0">B</text><text x="11.900" y="8" font-family="Liberation Mono,monospace" font-size="6.800" font-weight="bold" fill="#000" letter-spacing="0">C</text></svg>
<div class="hdr" style="left:882.5px;top:204.500px;max-width:98.5px;overflow:hidden">Aktualnie osób</div>
<div class="vl" style="left:981px;top:199px;height:49px"></div>
<div class="eq" style="left:885px;top:233px"></div>
<div class="hdr" style="left:987.5px;top:204.500px;max-width:100.5px;overflow:hidden">Docelowo osób</div>
<div class="vl" style="left:1088px;top:199px;height:49px"></div>
<div class="eq" style="left:990px;top:233px"></div>
<div class="hdr" style="left:1094.5px;top:204.500px;max-width:64.5px;overflow:hidden">Brakuje</div>
<div class="vl" style="left:1159px;top:199px;height:49px"></div>
<div class="eq" style="left:1097px;top:233px"></div>
<div class="hdr" style="left:1165.5px;top:204.500px;max-width:109.5px;overflow:hidden">Aktualnie etatów</div>
<div class="vl" style="left:1275px;top:199px;height:49px"></div>
<div class="eq" style="left:1168px;top:233px"></div>
<div class="hdr" style="left:1281.5px;top:204.500px;max-width:111.5px;overflow:hidden">Docelowo etatów</div>
<div class="vl" style="left:1393px;top:199px;height:49px"></div>
<div class="eq" style="left:1284px;top:233px"></div>
<div class="hdr" style="left:1399.5px;top:204.500px;max-width:64.5px;overflow:hidden">Brakuje</div>
<div class="vl" style="left:1464px;top:199px;height:49px"></div>
<div class="eq" style="left:1402px;top:233px"></div>
<div class="hdr" style="left:1470.5px;top:204.500px;max-width:98.5px;overflow:hidden">Aktualnie osób</div>
<div class="vl" style="left:1569px;top:199px;height:49px"></div>
<div class="eq" style="left:1473px;top:233px"></div>
<div class="hdr" style="left:1575.5px;top:204.500px;max-width:100.5px;overflow:hidden">Docelowo osób</div>
<div class="vl" style="left:1676px;top:199px;height:49px"></div>
<div class="eq" style="left:1578px;top:233px"></div>
<div class="hdr" style="left:1682.5px;top:204.500px;max-width:64.5px;overflow:hidden">Brakuje</div>
<div class="vl" style="left:1747px;top:199px;height:49px"></div>
<div class="eq" style="left:1685px;top:233px"></div>
<div class="hdr" style="left:1753.5px;top:204.500px;max-width:109.5px;overflow:hidden">Aktualnie etatów</div>
<div class="vl" style="left:1863px;top:199px;height:49px"></div>
<div class="eq" style="left:1756px;top:233px"></div>
<div class="hdr" style="left:1869.5px;top:204.500px;max-width:35.5px;overflow:hidden">Docelowo etatów</div>
<div class="eq" style="left:1872px;top:233px"></div>
<svg class="a" style="left:377px;top:207px" width="9" height="8" viewBox="0 0 9 8"><path d="M0.500 0.500h2M0.500 2.500h4M0.500 4.500h6M0.500 6.500h8" stroke="#9aa0b3" stroke-width="1"/></svg>
<div class="a" style="left:214px;top:247px;width:1691px;height:585px;overflow:hidden;background:#f4f6fb">
<div class="hz" style="left:36px;top:0;width:1655px;background:#b9c2d6"></div>
<div class="row" style="top:1px;width:1691px">
<svg class="a" style="left:5px;top:8.5px" width="8" height="6" viewBox="0 0 8 6"><path d="M0.700 1l3.300 3.500 3.300-3.500" fill="none" stroke="#2a2a2a" stroke-width="1.300"/></svg>
<div class="a" style="left:20px;top:7.0px;width:14px;height:7px;background:#fbd680;border:1px solid #eea52b;border-radius:1px"></div>
<div class="c o" style="left:36px;width:142px;border-left:1px solid #b9c2d6;border-top:1px solid #b9c2d6;top:-1px;height:22px;line-height:20px;padding-left:5.500px">Firma</div>
<div class="c o" style="left:178px;width:261px;padding-left:5.500px;">Nasza firma</div>
<div class="c o" style="left:439px;width:113px;padding-left:5.500px;"></div>
<div class="c o" style="left:552px;width:63px;padding-left:5.500px;">550</div>
<div class="c o" style="left:615px;width:48px;padding-left:5.500px;">81</div>
<div class="c r o" style="left:663px;width:105px;">75</div>
<div class="c o" style="left:768px;width:107px"><span class="a" style="right:5.500px;top:0;line-height:20px">78</span><div class="bar" style="left:3px;width:96px"><span style="right:-1.5px">78</span></div></div>
<div class="c r o" style="left:875px;width:71px;">3</div>
<div class="c r o" style="left:946px;width:116px;">76,0</div>
<div class="c o" style="left:1062px;width:118px"><span class="a" style="right:5.500px;top:0;line-height:20px">78,0</span><div class="bar" style="left:3px;width:108px"><span style="right:-0.5px">78,0</span></div></div>
<div class="c r o" style="left:1180px;width:71px;">2,0</div>
<div class="c r o" style="left:1251px;width:105px;">0</div>
<div class="c o" style="left:1356px;width:107px"><span class="a" style="right:5.500px;top:0;line-height:20px">0</span></div>
<div class="c r o" style="left:1463px;width:71px;">0</div>
<div class="c r o" style="left:1534px;width:116px;">0,0</div>
<div class="c o" style="left:1650px;width:60px;border-right:0"></div>
</div>
<div class="row" style="top:22px;width:1691px">
<svg class="a" style="left:23px;top:8.5px" width="8" height="6" viewBox="0 0 8 6"><path d="M0.700 1l3.300 3.500 3.300-3.500" fill="none" stroke="#2a2a2a" stroke-width="1.300"/></svg>
<svg class="a" style="left:38px;top:3.5px" width="14" height="14" viewBox="0 0 14 14"><ellipse cx="7" cy="4" rx="3" ry="3.800" fill="#2c8fd1"/><path d="M0 13.500c.3-2.500 2-3.700 4.500-4.300l2.500 1 2.500-1c2.500.6 4.200 1.800 4.500 4.300z" fill="#2c8fd1"/></svg>
<div class="c e" style="left:54px;width:124px;border-left:1px solid #b9c2d6;border-top:1px solid #b9c2d6;top:-1px;height:22px;line-height:20px;padding-left:5.500px">Pre</div>
<div class="c e" style="left:178px;width:261px;padding-left:5.500px;">Prezes</div>
<div class="c e" style="left:439px;width:113px;padding-left:5.500px;">Prezes</div>
<div class="c e" style="left:552px;width:63px;padding-left:5.500px;"></div>
<div class="c e" style="left:615px;width:48px;padding-left:5.500px;"></div>
<div class="c r e" style="left:663px;width:105px;">70</div>
<div class="c e" style="left:768px;width:107px"><span class="a" style="right:5.500px;top:0;line-height:20px">78</span><div class="bar" style="left:3px;width:90px"><span style="right:-7.5px">78</span></div></div>
<div class="c r e" style="left:875px;width:71px;">8</div>
<div class="c r e" style="left:946px;width:116px;">70,0</div>
<div class="c e" style="left:1062px;width:118px"><span class="a" style="right:5.500px;top:0;line-height:20px">78,0</span><div class="bar" style="left:3px;width:100px"><span style="right:-8.5px">78,0</span></div></div>
<div class="c r e" style="left:1180px;width:71px;">8,0</div>
<div class="c r e" style="left:1251px;width:105px;">1</div>
<div class="c e" style="left:1356px;width:107px"><span class="a" style="right:5.500px;top:0;line-height:20px">1</span><div class="bar" style="left:3px;width:100px"><span style="right:2.5px">1</span></div></div>
<div class="c r e" style="left:1463px;width:71px;">0</div>
<div class="c r e" style="left:1534px;width:116px;">1,0</div>
<div class="c e" style="left:1650px;width:60px;border-right:0"><div class="bar" style="left:3px;width:111px"></div></div>
</div>
<div class="row" style="top:43px;width:1691px">
<svg class="a" style="left:41px;top:8.5px" width="8" height="6" viewBox="0 0 8 6"><path d="M0.700 1l3.300 3.500 3.300-3.500" fill="none" stroke="#2a2a2a" stroke-width="1.300"/></svg>
<div class="a" style="left:56px;top:7.0px;width:14px;height:7px;background:#fbd680;border:1px solid #eea52b;border-radius:1px"></div>
<div class="c o" style="left:72px;width:106px;border-left:1px solid #b9c2d6;border-top:1px solid #b9c2d6;top:-1px;height:22px;line-height:20px;padding-left:5.500px">Zarz</div>
<div class="c o" style="left:178px;width:261px;padding-left:5.500px;">Zarząd</div>
<div class="c o" style="left:439px;width:113px;padding-left:5.500px;"></div>
<div class="c o" style="left:552px;width:63px;padding-left:5.500px;">550</div>
<div class="c o" style="left:615px;width:48px;padding-left:5.500px;">81</div>
<div class="c r o" style="left:663px;width:105px;">1</div>
<div class="c o" style="left:768px;width:107px"><span class="a" style="right:5.500px;top:0;line-height:20px">2</span><div class="bar" style="left:3px;width:49px"><span style="right:-48.5px">2</span></div></div>
<div class="c r o" style="left:875px;width:71px;">1</div>
<div class="c r o" style="left:946px;width:116px;">1,0</div>
<div class="c o" style="left:1062px;width:118px"><span class="a" style="right:5.500px;top:0;line-height:20px">2,0</span><div class="bar" style="left:3px;width:54px"><span style="right:-54.5px">2,0</span></div></div>
<div class="c r o" style="left:1180px;width:71px;">1,0</div>
<div class="c r o" style="left:1251px;width:105px;">0</div>
<div class="c o" style="left:1356px;width:107px"><span class="a" style="right:5.500px;top:0;line-height:20px">0</span></div>
<div class="c r o" style="left:1463px;width:71px;">0</div>
<div class="c r o" style="left:1534px;width:116px;">0,0</div>
<div class="c o" style="left:1650px;width:60px;border-right:0"></div>
</div>
<div class="row" style="top:64px;width:1691px">
<svg class="a" style="left:74px;top:3.5px" width="14" height="14" viewBox="0 0 14 14"><ellipse cx="7" cy="4" rx="3" ry="3.800" fill="#2c8fd1"/><path d="M0 13.500c.3-2.500 2-3.700 4.500-4.300l2.500 1 2.500-1c2.500.6 4.200 1.800 4.500 4.300z" fill="#2c8fd1"/></svg>
<div class="c e" style="left:90px;width:88px;border-left:1px solid #b9c2d6;border-top:1px solid #b9c2d6;top:-1px;height:22px;line-height:20px;padding-left:5.500px">Zar</div>
<div class="c e" style="left:178px;width:261px;padding-left:5.500px;">Członek zarządu</div>
<div class="c e" style="left:439px;width:113px;padding-left:5.500px;">Zarząd</div>
<div class="c e" style="left:552px;width:63px;padding-left:5.500px;"></div>
<div class="c e" style="left:615px;width:48px;padding-left:5.500px;"></div>
<div class="c r e" style="left:663px;width:105px;">1</div>
<div class="c e" style="left:768px;width:107px"><span class="a" style="right:5.500px;top:0;line-height:20px">2</span><div class="bar" style="left:3px;width:49px"><span style="right:-48.5px">2</span></div></div>
<div class="c r e" style="left:875px;width:71px;">1</div>
<div class="c r e" style="left:946px;width:116px;">1,0</div>
<div class="c e" style="left:1062px;width:118px"><span class="a" style="right:5.500px;top:0;line-height:20px">2,0</span><div class="bar" style="left:3px;width:54px"><span style="right:-54.5px">2,0</span></div></div>
<div class="c r e" style="left:1180px;width:71px;">1,0</div>
<div class="c r e" style="left:1251px;width:105px;">1</div>
<div class="c e" style="left:1356px;width:107px"><span class="a" style="right:5.500px;top:0;line-height:20px">2</span><div class="bar" style="left:3px;width:49px"><span style="right:-48.5px">2</span></div></div>
<div class="c r e" style="left:1463px;width:71px;">1</div>
<div class="c r e" style="left:1534px;width:116px;">1,0</div>
<div class="c e" style="left:1650px;width:60px;border-right:0"><div class="bar" style="left:3px;width:54px"></div></div>
</div>
<div class="row" style="top:85px;width:1691px">
<svg class="a" style="left:41px;top:8.5px" width="8" height="6" viewBox="0 0 8 6"><path d="M0.700 1l3.300 3.500 3.300-3.500" fill="none" stroke="#2a2a2a" stroke-width="1.300"/></svg>
<svg class="a" style="left:56px;top:3.5px" width="14" height="14" viewBox="0 0 14 14"><ellipse cx="7" cy="4" rx="3" ry="3.800" fill="#2c8fd1"/><path d="M0 13.500c.3-2.500 2-3.700 4.500-4.300l2.500 1 2.500-1c2.500.6 4.200 1.800 4.500 4.300z" fill="#2c8fd1"/></svg>
<div class="c o" style="left:72px;width:106px;border-left:1px solid #b9c2d6;border-top:1px solid #b9c2d6;top:-1px;height:22px;line-height:20px;padding-left:5.500px">Vic</div>
<div class="c o" style="left:178px;width:261px;padding-left:5.500px;">Wiceprezes</div>
<div class="c o" style="left:439px;width:113px;padding-left:5.500px;">Wiceprezes</div>
<div class="c o" style="left:552px;width:63px;padding-left:5.500px;"></div>
<div class="c o" style="left:615px;width:48px;padding-left:5.500px;"></div>
<div class="c r o" style="left:663px;width:105px;">56</div>
<div class="c o" style="left:768px;width:107px"><span class="a" style="right:5.500px;top:0;line-height:20px">57</span><div class="bar" style="left:3px;width:98px"><span style="right:0.5px">57</span></div></div>
<div class="c r o" style="left:875px;width:71px;">1</div>
<div class="c r o" style="left:946px;width:116px;">56,5</div>
<div class="c o" style="left:1062px;width:118px"><span class="a" style="right:5.500px;top:0;line-height:20px">57,0</span><div class="bar" style="left:3px;width:110px"><span style="right:1.5px">57,0</span></div></div>
<div class="c r o" style="left:1180px;width:71px;">0,5</div>
<div class="c r o" style="left:1251px;width:105px;">3</div>
<div class="c o" style="left:1356px;width:107px"><span class="a" style="right:5.500px;top:0;line-height:20px">1</span><div class="bar" style="left:3px;width:100px"><span style="right:2.5px">1</span></div><svg class="a" style="left:5.5px;top:5px" width="13" height="11" viewBox="0 0 13 11"><path d="M6.500 0.300l6.200 10.400h-12.400z" fill="#f6a821" stroke="#f6a821" stroke-width=".6" stroke-linejoin="round"/><rect x="5.800" y="3.300" width="1.400" height="4.200" fill="#7a4a00"/><rect x="5.800" y="8.300" width="1.400" height="1.400" fill="#7a4a00"/></svg></div>
<div class="c r o" style="left:1463px;width:71px;">-2</div>
<div class="c r o" style="left:1534px;width:116px;">3,0</div>
<div class="c o" style="left:1650px;width:60px;border-right:0"><div class="bar" style="left:3px;width:111px"></div><svg class="a" style="left:5.5px;top:5px" width="13" height="11" viewBox="0 0 13 11"><path d="M6.500 0.300l6.200 10.400h-12.400z" fill="#f6a821" stroke="#f6a821" stroke-width=".6" stroke-linejoin="round"/><rect x="5.800" y="3.300" width="1.400" height="4.200" fill="#7a4a00"/><rect x="5.800" y="8.300" width="1.400" height="1.400" fill="#7a4a00"/></svg></div>
</div>
<div class="row" style="top:106px;width:1691px">
<svg class="a" style="left:59px;top:8.5px" width="8" height="6" viewBox="0 0 8 6"><path d="M0.700 1l3.300 3.500 3.300-3.500" fill="none" stroke="#2a2a2a" stroke-width="1.300"/></svg>
<div class="a" style="left:74px;top:7.0px;width:14px;height:7px;background:#fbd680;border:1px solid #eea52b;border-radius:1px"></div>
<div class="c e" style="left:90px;width:88px;border-left:1px solid #b9c2d6;border-top:1px solid #b9c2d6;top:-1px;height:22px;line-height:20px;padding-left:5.500px">Prod</div>
<div class="c e" style="left:178px;width:261px;padding-left:5.500px;">Dział Produkcji</div>
<div class="c e" style="left:439px;width:113px;padding-left:5.500px;"></div>
<div class="c e" style="left:552px;width:63px;padding-left:5.500px;">511</div>
<div class="c e" style="left:615px;width:48px;padding-left:5.500px;">01</div>
<div class="c r e" style="left:663px;width:105px;">22</div>
<div class="c e" style="left:768px;width:107px"><span class="a" style="right:5.500px;top:0;line-height:20px">28</span><div class="bar" style="left:3px;width:78px"><span style="right:-19.5px">28</span></div></div>
<div class="c r e" style="left:875px;width:71px;">6</div>
<div class="c r e" style="left:946px;width:116px;">22,5</div>
<div class="c e" style="left:1062px;width:118px"><span class="a" style="right:5.500px;top:0;line-height:20px">28,0</span><div class="bar" style="left:3px;width:89px"><span style="right:-19.5px">28,0</span></div></div>
<div class="c r e" style="left:1180px;width:71px;">5,5</div>
<div class="c r e" style="left:1251px;width:105px;">0</div>
<div class="c e" style="left:1356px;width:107px"><span class="a" style="right:5.500px;top:0;line-height:20px">0</span></div>
<div class="c r e" style="left:1463px;width:71px;">0</div>
<div class="c r e" style="left:1534px;width:116px;">0,0</div>
<div class="c e" style="left:1650px;width:60px;border-right:0"></div>
</div>
<div class="row" style="top:127px;width:1691px">
<svg class="a" style="left:92px;top:3.5px" width="14" height="14" viewBox="0 0 14 14"><ellipse cx="7" cy="4" rx="3" ry="3.800" fill="#2c8fd1"/><path d="M0 13.500c.3-2.500 2-3.700 4.500-4.300l2.500 1 2.500-1c2.500.6 4.200 1.800 4.500 4.300z" fill="#2c8fd1"/></svg>
<div class="c o" style="left:108px;width:70px;border-left:1px solid #b9c2d6;border-top:1px solid #b9c2d6;top:-1px;height:22px;line-height:20px;padding-left:5.500px">KProd</div>
<div class="c o" style="left:178px;width:261px;padding-left:5.500px;">Kierownik działu produkcji</div>
<div class="c o" style="left:439px;width:113px;padding-left:5.500px;">KierownikDziału</div>
<div class="c o" style="left:552px;width:63px;padding-left:5.500px;"></div>
<div class="c o" style="left:615px;width:48px;padding-left:5.500px;"></div>
<div class="c r o" style="left:663px;width:105px;">0</div>
<div class="c o" style="left:768px;width:107px"><span class="a" style="right:5.500px;top:0;line-height:20px">1</span></div>
<div class="c r o" style="left:875px;width:71px;">1</div>
<div class="c r o" style="left:946px;width:116px;">0,0</div>
<div class="c o" style="left:1062px;width:118px"><span class="a" style="right:5.500px;top:0;line-height:20px">1,0</span></div>
<div class="c r o" style="left:1180px;width:71px;">1,0</div>
<div class="c r o" style="left:1251px;width:105px;">0</div>
<div class="c o" style="left:1356px;width:107px"><span class="a" style="right:5.500px;top:0;line-height:20px">1</span></div>
<div class="c r o" style="left:1463px;width:71px;">1</div>
<div class="c r o" style="left:1534px;width:116px;">0,0</div>
<div class="c o" style="left:1650px;width:60px;border-right:0"></div>
</div>
<div class="row" style="top:148px;width:1691px">
<svg class="a" style="left:77px;top:8.5px" width="8" height="6" viewBox="0 0 8 6"><path d="M0.700 1l3.300 3.500 3.300-3.500" fill="none" stroke="#2a2a2a" stroke-width="1.300"/></svg>
<div class="a" style="left:92px;top:7.0px;width:14px;height:7px;background:#fbd680;border:1px solid #eea52b;border-radius:1px"></div>
<div class="c e" style="left:108px;width:70px;border-left:1px solid #b9c2d6;border-top:1px solid #b9c2d6;top:-1px;height:22px;line-height:20px;padding-left:5.500px">Pr1</div>
<div class="c e" style="left:178px;width:261px;padding-left:5.500px;">Oddział produkcji 1(Brygada)</div>
<div class="c e" style="left:439px;width:113px;padding-left:5.500px;"></div>
<div class="c e" style="left:552px;width:63px;padding-left:5.500px;"></div>
<div class="c e" style="left:615px;width:48px;padding-left:5.500px;"></div>
<div class="c r e" style="left:663px;width:105px;">19</div>
<div class="c e" style="left:768px;width:107px"><span class="a" style="right:5.500px;top:0;line-height:20px">12</span><div class="bar" style="left:3px;width:100px"><span style="right:2.5px">12</span></div><svg class="a" style="left:5.5px;top:5px" width="13" height="11" viewBox="0 0 13 11"><path d="M6.500 0.300l6.200 10.400h-12.400z" fill="#f6a821" stroke="#f6a821" stroke-width=".6" stroke-linejoin="round"/><rect x="5.800" y="3.300" width="1.400" height="4.200" fill="#7a4a00"/><rect x="5.800" y="8.300" width="1.400" height="1.400" fill="#7a4a00"/></svg></div>
<div class="c r e" style="left:875px;width:71px;">-7</div>
<div class="c r e" style="left:946px;width:116px;">19,0</div>
<div class="c e" style="left:1062px;width:118px"><span class="a" style="right:5.500px;top:0;line-height:20px">12,0</span><div class="bar" style="left:3px;width:111px"><span style="right:2.5px">12,0</span></div><svg class="a" style="left:5.5px;top:5px" width="13" height="11" viewBox="0 0 13 11"><path d="M6.500 0.300l6.200 10.400h-12.400z" fill="#f6a821" stroke="#f6a821" stroke-width=".6" stroke-linejoin="round"/><rect x="5.800" y="3.300" width="1.400" height="4.200" fill="#7a4a00"/><rect x="5.800" y="8.300" width="1.400" height="1.400" fill="#7a4a00"/></svg></div>
<div class="c r e" style="left:1180px;width:71px;">-7,0</div>
<div class="c r e" style="left:1251px;width:105px;">0</div>
<div class="c e" style="left:1356px;width:107px"><span class="a" style="right:5.500px;top:0;line-height:20px">0</span></div>
<div class="c r e" style="left:1463px;width:71px;">0</div>
<div class="c r e" style="left:1534px;width:116px;">0,0</div>
<div class="c e" style="left:1650px;width:60px;border-right:0"></div>
</div>
<div class="row" style="top:169px;width:1691px">
<svg class="a" style="left:110px;top:3.5px" width="14" height="14" viewBox="0 0 14 14"><ellipse cx="7" cy="4" rx="3" ry="3.800" fill="#2c8fd1"/><path d="M0 13.500c.3-2.500 2-3.700 4.500-4.300l2.500 1 2.500-1c2.500.6 4.200 1.800 4.500 4.300z" fill="#2c8fd1"/></svg>
<div class="c o" style="left:126px;width:52px;border-left:1px solid #b9c2d6;border-top:1px solid #b9c2d6;top:-1px;height:22px;line-height:20px;padding-left:5.500px">Mal</div>
<div class="c o" style="left:178px;width:261px;padding-left:5.500px;">Malarz</div>
<div class="c o" style="left:439px;width:113px;padding-left:5.500px;">Malarz</div>
<div class="c o" style="left:552px;width:63px;padding-left:5.500px;"></div>
<div class="c o" style="left:615px;width:48px;padding-left:5.500px;"></div>
<div class="c r o" style="left:663px;width:105px;">8</div>
<div class="c o" style="left:768px;width:107px"><span class="a" style="right:5.500px;top:0;line-height:20px">3</span><div class="bar" style="left:3px;width:100px"><span style="right:2.5px">3</span></div><svg class="a" style="left:5.5px;top:5px" width="13" height="11" viewBox="0 0 13 11"><path d="M6.500 0.300l6.200 10.400h-12.400z" fill="#f6a821" stroke="#f6a821" stroke-width=".6" stroke-linejoin="round"/><rect x="5.800" y="3.300" width="1.400" height="4.200" fill="#7a4a00"/><rect x="5.800" y="8.300" width="1.400" height="1.400" fill="#7a4a00"/></svg></div>
<div class="c r o" style="left:875px;width:71px;">-5</div>
<div class="c r o" style="left:946px;width:116px;">8,0</div>
<div class="c o" style="left:1062px;width:118px"><span class="a" style="right:5.500px;top:0;line-height:20px">3,0</span><div class="bar" style="left:3px;width:111px"><span style="right:2.5px">3,0</span></div><svg class="a" style="left:5.5px;top:5px" width="13" height="11" viewBox="0 0 13 11"><path d="M6.500 0.300l6.200 10.400h-12.400z" fill="#f6a821" stroke="#f6a821" stroke-width=".6" stroke-linejoin="round"/><rect x="5.800" y="3.300" width="1.400" height="4.200" fill="#7a4a00"/><rect x="5.800" y="8.300" width="1.400" height="1.400" fill="#7a4a00"/></svg></div>
<div class="c r o" style="left:1180px;width:71px;">-5,0</div>
<div class="c r o" style="left:1251px;width:105px;">8</div>
<div class="c o" style="left:1356px;width:107px"><span class="a" style="right:5.500px;top:0;line-height:20px">3</span><div class="bar" style="left:3px;width:100px"><span style="right:2.5px">3</span></div><svg class="a" style="left:5.5px;top:5px" width="13" height="11" viewBox="0 0 13 11"><path d="M6.500 0.300l6.200 10.400h-12.400z" fill="#f6a821" stroke="#f6a821" stroke-width=".6" stroke-linejoin="round"/><rect x="5.800" y="3.300" width="1.400" height="4.200" fill="#7a4a00"/><rect x="5.800" y="8.300" width="1.400" height="1.400" fill="#7a4a00"/></svg></div>
<div class="c r o" style="left:1463px;width:71px;">-5</div>
<div class="c r o" style="left:1534px;width:116px;">8,0</div>
<div class="c o" style="left:1650px;width:60px;border-right:0"><div class="bar" style="left:3px;width:111px"></div><svg class="a" style="left:5.5px;top:5px" width="13" height="11" viewBox="0 0 13 11"><path d="M6.500 0.300l6.200 10.400h-12.400z" fill="#f6a821" stroke="#f6a821" stroke-width=".6" stroke-linejoin="round"/><rect x="5.800" y="3.300" width="1.400" height="4.200" fill="#7a4a00"/><rect x="5.800" y="8.300" width="1.400" height="1.400" fill="#7a4a00"/></svg></div>
</div>
<div class="row" style="top:190px;width:1691px">
<svg class="a" style="left:110px;top:3.5px" width="14" height="14" viewBox="0 0 14 14"><ellipse cx="7" cy="4" rx="3" ry="3.800" fill="#2c8fd1"/><path d="M0 13.500c.3-2.500 2-3.700 4.500-4.300l2.500 1 2.500-1c2.500.6 4.200 1.800 4.500 4.300z" fill="#2c8fd1"/></svg>
<div class="c sel" style="left:126px;width:52px;border-left:1px solid #b9c2d6;border-top:1px solid #e8710d;top:-1px;height:22px;line-height:20px;padding-left:5.500px">Mec</div>
<div class="c sel" style="left:178px;width:261px;padding-left:5.500px;top:-1px;height:22px;padding-top:1px;outline:1px dotted #4a2800;outline-offset:-1px;">Mechanik</div>
<div class="c sel" style="left:439px;width:113px;padding-left:5.500px;top:-1px;height:22px;padding-top:1px;">Mechanik</div>
<div class="c sel" style="left:552px;width:63px;padding-left:5.500px;top:-1px;height:22px;padding-top:1px;"></div>
<div class="c sel" style="left:615px;width:48px;padding-left:5.500px;top:-1px;height:22px;padding-top:1px;"></div>
<div class="c r sel" style="left:663px;width:105px;top:-1px;height:22px;padding-top:1px;">4</div>
<div class="c sel" style="left:768px;width:107px;top:-1px;height:22px"><div class="a" style="left:0;top:1px;width:106px;height:20px"><span class="a" style="right:5.500px;top:0;line-height:20px">2</span><div class="bar" style="left:3px;width:100px"><span style="right:2.5px">2</span></div><svg class="a" style="left:5.5px;top:5px" width="13" height="11" viewBox="0 0 13 11"><path d="M6.500 0.300l6.200 10.400h-12.400z" fill="#f6a821" stroke="#f6a821" stroke-width=".6" stroke-linejoin="round"/><rect x="5.800" y="3.300" width="1.400" height="4.200" fill="#7a4a00"/><rect x="5.800" y="8.300" width="1.400" height="1.400" fill="#7a4a00"/></svg></div></div>
<div class="c r sel" style="left:875px;width:71px;top:-1px;height:22px;padding-top:1px;">-2</div>
<div class="c r sel" style="left:946px;width:116px;top:-1px;height:22px;padding-top:1px;">4,0</div>
<div class="c sel" style="left:1062px;width:118px;top:-1px;height:22px"><div class="a" style="left:0;top:1px;width:117px;height:20px"><span class="a" style="right:5.500px;top:0;line-height:20px">2,0</span><div class="bar" style="left:3px;width:111px"><span style="right:2.5px">2,0</span></div><svg class="a" style="left:5.5px;top:5px" width="13" height="11" viewBox="0 0 13 11"><path d="M6.500 0.300l6.200 10.400h-12.400z" fill="#f6a821" stroke="#f6a821" stroke-width=".6" stroke-linejoin="round"/><rect x="5.800" y="3.300" width="1.400" height="4.200" fill="#7a4a00"/><rect x="5.800" y="8.300" width="1.400" height="1.400" fill="#7a4a00"/></svg></div></div>
<div class="c r sel" style="left:1180px;width:71px;top:-1px;height:22px;padding-top:1px;">-2,0</div>
<div class="c r sel" style="left:1251px;width:105px;top:-1px;height:22px;padding-top:1px;">4</div>
<div class="c sel" style="left:1356px;width:107px;top:-1px;height:22px"><div class="a" style="left:0;top:1px;width:106px;height:20px"><span class="a" style="right:5.500px;top:0;line-height:20px">2</span><div class="bar" style="left:3px;width:100px"><span style="right:2.5px">2</span></div><svg class="a" style="left:5.5px;top:5px" width="13" height="11" viewBox="0 0 13 11"><path d="M6.500 0.300l6.200 10.400h-12.400z" fill="#f6a821" stroke="#f6a821" stroke-width=".6" stroke-linejoin="round"/><rect x="5.800" y="3.300" width="1.400" height="4.200" fill="#7a4a00"/><rect x="5.800" y="8.300" width="1.400" height="1.400" fill="#7a4a00"/></svg></div></div>
<div class="c r sel" style="left:1463px;width:71px;top:-1px;height:22px;padding-top:1px;">-2</div>
<div class="c r sel" style="left:1534px;width:116px;top:-1px;height:22px;padding-top:1px;">4,0</div>
<div class="c sel" style="left:1650px;width:60px;border-right:0;top:-1px;height:22px"><div class="a" style="left:0;top:1px;width:60px;height:20px"><div class="bar" style="left:3px;width:111px"></div><svg class="a" style="left:5.5px;top:5px" width="13" height="11" viewBox="0 0 13 11"><path d="M6.500 0.300l6.200 10.400h-12.400z" fill="#f6a821" stroke="#f6a821" stroke-width=".6" stroke-linejoin="round"/><rect x="5.800" y="3.300" width="1.400" height="4.200" fill="#7a4a00"/><rect x="5.800" y="8.300" width="1.400" height="1.400" fill="#7a4a00"/></svg></div></div>
</div>
<div class="row" style="top:211px;width:1691px">
<svg class="a" style="left:110px;top:3.5px" width="14" height="14" viewBox="0 0 14 14"><ellipse cx="7" cy="4" rx="3" ry="3.800" fill="#2c8fd1"/><path d="M0 13.500c.3-2.500 2-3.700 4.500-4.300l2.500 1 2.500-1c2.500.6 4.200 1.800 4.500 4.300z" fill="#2c8fd1"/></svg>
<div class="c o" style="left:126px;width:52px;border-left:1px solid #b9c2d6;border-top:1px solid #b9c2d6;top:-1px;height:22px;line-height:20px;padding-left:5.500px">Ope</div>
<div class="c o" style="left:178px;width:261px;padding-left:5.500px;">Operator maszyn obróbczych sterowanych cyfrowo</div>
<div class="c o" style="left:439px;width:113px;padding-left:5.500px;">OperatorCNC</div>
<div class="c o" style="left:552px;width:63px;padding-left:5.500px;"></div>
<div class="c o" style="left:615px;width:48px;padding-left:5.500px;"></div>
<div class="c r o" style="left:663px;width:105px;">1</div>
<div class="c o" style="left:768px;width:107px"><span class="a" style="right:5.500px;top:0;line-height:20px">1</span><div class="bar" style="left:3px;width:100px"><span style="right:2.5px">1</span></div></div>
<div class="c r o" style="left:875px;width:71px;">0</div>
<div class="c r o" style="left:946px;width:116px;">1,0</div>
<div class="c o" style="left:1062px;width:118px"><span class="a" style="right:5.500px;top:0;line-height:20px">1,0</span><div class="bar" style="left:3px;width:111px"><span style="right:2.5px">1,0</span></div></div>
<div class="c r o" style="left:1180px;width:71px;">0,0</div>
<div class="c r o" style="left:1251px;width:105px;">1</div>
<div class="c o" style="left:1356px;width:107px"><span class="a" style="right:5.500px;top:0;line-height:20px">1</span><div class="bar" style="left:3px;width:100px"><span style="right:2.5px">1</span></div></div>
<div class="c r o" style="left:1463px;width:71px;">0</div>
<div class="c r o" style="left:1534px;width:116px;">1,0</div>
<div class="c o" style="left:1650px;width:60px;border-right:0"><div class="bar" style="left:3px;width:111px"></div></div>
</div>
<div class="row" style="top:232px;width:1691px">
<svg class="a" style="left:110px;top:3.5px" width="14" height="14" viewBox="0 0 14 14"><ellipse cx="7" cy="4" rx="3" ry="3.800" fill="#2c8fd1"/><path d="M0 13.500c.3-2.500 2-3.700 4.500-4.300l2.500 1 2.500-1c2.500.6 4.200 1.800 4.500 4.300z" fill="#2c8fd1"/></svg>
<div class="c e" style="left:126px;width:52px;border-left:1px solid #b9c2d6;border-top:1px solid #b9c2d6;top:-1px;height:22px;line-height:20px;padding-left:5.500px">StS</div>
<div class="c e" style="left:178px;width:261px;padding-left:5.500px;">Starszy spawacz</div>
<div class="c e" style="left:439px;width:113px;padding-left:5.500px;">StSpawacz</div>
<div class="c e" style="left:552px;width:63px;padding-left:5.500px;"></div>
<div class="c e" style="left:615px;width:48px;padding-left:5.500px;"></div>
<div class="c r e" style="left:663px;width:105px;">3</div>
<div class="c e" style="left:768px;width:107px"><span class="a" style="right:5.500px;top:0;line-height:20px">0</span></div>
<div class="c r e" style="left:875px;width:71px;">-3</div>
<div class="c r e" style="left:946px;width:116px;">3,0</div>
<div class="c e" style="left:1062px;width:118px"><span class="a" style="right:5.500px;top:0;line-height:20px">0,0</span></div>
<div class="c r e" style="left:1180px;width:71px;">-3,0</div>
<div class="c r e" style="left:1251px;width:105px;">3</div>
<div class="c e" style="left:1356px;width:107px"><span class="a" style="right:5.500px;top:0;line-height:20px">0</span></div>
<div class="c r e" style="left:1463px;width:71px;">-3</div>
<div class="c r e" style="left:1534px;width:116px;">3,0</div>
<div class="c e" style="left:1650px;width:60px;border-right:0"></div>
</div>
<div class="row" style="top:253px;width:1691px">
<svg class="a" style="left:110px;top:3.5px" width="14" height="14" viewBox="0 0 14 14"><ellipse cx="7" cy="4" rx="3" ry="3.800" fill="#2c8fd1"/><path d="M0 13.500c.3-2.500 2-3.700 4.500-4.300l2.500 1 2.500-1c2.500.6 4.200 1.800 4.500 4.300z" fill="#2c8fd1"/></svg>
<div class="c o" style="left:126px;width:52px;border-left:1px solid #b9c2d6;border-top:1px solid #b9c2d6;top:-1px;height:22px;line-height:20px;padding-left:5.500px">MłS</div>
<div class="c o" style="left:178px;width:261px;padding-left:5.500px;">Młodszy spawacz</div>
<div class="c o" style="left:439px;width:113px;padding-left:5.500px;">MłSpawacz</div>
<div class="c o" style="left:552px;width:63px;padding-left:5.500px;"></div>
<div class="c o" style="left:615px;width:48px;padding-left:5.500px;"></div>
<div class="c r o" style="left:663px;width:105px;">3</div>
<div class="c o" style="left:768px;width:107px"><span class="a" style="right:5.500px;top:0;line-height:20px">6</span><div class="bar" style="left:3px;width:49px"><span style="right:-48.5px">6</span></div></div>
<div class="c r o" style="left:875px;width:71px;">3</div>
<div class="c r o" style="left:946px;width:116px;">3,0</div>
<div class="c o" style="left:1062px;width:118px"><span class="a" style="right:5.500px;top:0;line-height:20px">6,0</span><div class="bar" style="left:3px;width:54px"><span style="right:-54.5px">6,0</span></div></div>
<div class="c r o" style="left:1180px;width:71px;">3,0</div>
<div class="c r o" style="left:1251px;width:105px;">3</div>
<div class="c o" style="left:1356px;width:107px"><span class="a" style="right:5.500px;top:0;line-height:20px">6</span><div class="bar" style="left:3px;width:49px"><span style="right:-48.5px">6</span></div></div>
<div class="c r o" style="left:1463px;width:71px;">3</div>
<div class="c r o" style="left:1534px;width:116px;">3,0</div>
<div class="c o" style="left:1650px;width:60px;border-right:0"><div class="bar" style="left:3px;width:54px"></div></div>
</div>
<div class="row" style="top:274px;width:1691px">
<svg class="a" style="left:110px;top:3.5px" width="14" height="14" viewBox="0 0 14 14"><ellipse cx="7" cy="4" rx="3" ry="3.800" fill="#2c8fd1"/><path d="M0 13.500c.3-2.500 2-3.700 4.500-4.300l2.500 1 2.500-1c2.500.6 4.200 1.800 4.500 4.300z" fill="#2c8fd1"/></svg>
<div class="c e" style="left:126px;width:52px;border-left:1px solid #b9c2d6;border-top:1px solid #b9c2d6;top:-1px;height:22px;line-height:20px;padding-left:5.500px">Ele</div>
<div class="c e" style="left:178px;width:261px;padding-left:5.500px;">Elektryk</div>
<div class="c e" style="left:439px;width:113px;padding-left:5.500px;">Elektryk</div>
<div class="c e" style="left:552px;width:63px;padding-left:5.500px;"></div>
<div class="c e" style="left:615px;width:48px;padding-left:5.500px;"></div>
<div class="c r e" style="left:663px;width:105px;">0</div>
<div class="c e" style="left:768px;width:107px"><span class="a" style="right:5.500px;top:0;line-height:20px">0</span></div>
<div class="c r e" style="left:875px;width:71px;">0</div>
<div class="c r e" style="left:946px;width:116px;">0,0</div>
<div class="c e" style="left:1062px;width:118px"><span class="a" style="right:5.500px;top:0;line-height:20px">0,0</span></div>
<div class="c r e" style="left:1180px;width:71px;">0,0</div>
<div class="c r e" style="left:1251px;width:105px;">0</div>
<div class="c e" style="left:1356px;width:107px"><span class="a" style="right:5.500px;top:0;line-height:20px">0</span></div>
<div class="c r e" style="left:1463px;width:71px;">0</div>
<div class="c r e" style="left:1534px;width:116px;">0,0</div>
<div class="c e" style="left:1650px;width:60px;border-right:0"></div>
</div>
<div class="row" style="top:295px;width:1691px">
<svg class="a" style="left:77px;top:8.5px" width="8" height="6" viewBox="0 0 8 6"><path d="M0.700 1l3.300 3.500 3.300-3.500" fill="none" stroke="#2a2a2a" stroke-width="1.300"/></svg>
<div class="a" style="left:92px;top:7.0px;width:14px;height:7px;background:#fbd680;border:1px solid #eea52b;border-radius:1px"></div>
<div class="c o" style="left:108px;width:70px;border-left:1px solid #b9c2d6;border-top:1px solid #b9c2d6;top:-1px;height:22px;line-height:20px;padding-left:5.500px">Pr2</div>
<div class="c o" style="left:178px;width:261px;padding-left:5.500px;">Oddział produkcji 2(Brygada)</div>
<div class="c o" style="left:439px;width:113px;padding-left:5.500px;"></div>
<div class="c o" style="left:552px;width:63px;padding-left:5.500px;"></div>
<div class="c o" style="left:615px;width:48px;padding-left:5.500px;"></div>
<div class="c r o" style="left:663px;width:105px;">3</div>
<div class="c o" style="left:768px;width:107px"><span class="a" style="right:5.500px;top:0;line-height:20px">7</span><div class="bar" style="left:3px;width:41px"><span style="right:-56.5px">7</span></div></div>
<div class="c r o" style="left:875px;width:71px;">4</div>
<div class="c r o" style="left:946px;width:116px;">2,5</div>
<div class="c o" style="left:1062px;width:118px"><span class="a" style="right:5.500px;top:0;line-height:20px">7,0</span><div class="bar" style="left:3px;width:38px"><span style="right:-70.5px">7,0</span></div></div>
<div class="c r o" style="left:1180px;width:71px;">4,5</div>
<div class="c r o" style="left:1251px;width:105px;">0</div>
<div class="c o" style="left:1356px;width:107px"><span class="a" style="right:5.500px;top:0;line-height:20px">0</span></div>
<div class="c r o" style="left:1463px;width:71px;">0</div>
<div class="c r o" style="left:1534px;width:116px;">0,0</div>
<div class="c o" style="left:1650px;width:60px;border-right:0"></div>
</div>
<div class="row" style="top:316px;width:1691px">
<svg class="a" style="left:110px;top:3.5px" width="14" height="14" viewBox="0 0 14 14"><ellipse cx="7" cy="4" rx="3" ry="3.800" fill="#2c8fd1"/><path d="M0 13.500c.3-2.500 2-3.700 4.500-4.300l2.500 1 2.500-1c2.500.6 4.200 1.800 4.500 4.300z" fill="#2c8fd1"/></svg>
<div class="c e" style="left:126px;width:52px;border-left:1px solid #b9c2d6;border-top:1px solid #b9c2d6;top:-1px;height:22px;line-height:20px;padding-left:5.500px">Ślu</div>
<div class="c e" style="left:178px;width:261px;padding-left:5.500px;">Ślusarz</div>
<div class="c e" style="left:439px;width:113px;padding-left:5.500px;">Ślusarz</div>
<div class="c e" style="left:552px;width:63px;padding-left:5.500px;"></div>
<div class="c e" style="left:615px;width:48px;padding-left:5.500px;"></div>
<div class="c r e" style="left:663px;width:105px;">1</div>
<div class="c e" style="left:768px;width:107px"><span class="a" style="right:5.500px;top:0;line-height:20px">4</span><div class="bar" style="left:3px;width:23px"><span style="right:-74.5px">4</span></div></div>
<div class="c r e" style="left:875px;width:71px;">3</div>
<div class="c r e" style="left:946px;width:116px;">0,5</div>
<div class="c e" style="left:1062px;width:118px"><span class="a" style="right:5.500px;top:0;line-height:20px">4,0</span><div class="bar" style="left:3px;width:12px"><span style="right:-96.5px">4,0</span></div></div>
<div class="c r e" style="left:1180px;width:71px;">3,5</div>
<div class="c r e" style="left:1251px;width:105px;">1</div>
<div class="c e" style="left:1356px;width:107px"><span class="a" style="right:5.500px;top:0;line-height:20px">4</span><div class="bar" style="left:3px;width:23px"><span style="right:-74.5px">4</span></div></div>
<div class="c r e" style="left:1463px;width:71px;">3</div>
<div class="c r e" style="left:1534px;width:116px;">0,5</div>
<div class="c e" style="left:1650px;width:60px;border-right:0"><div class="bar" style="left:3px;width:12px"></div></div>
</div>
<div class="row" style="top:337px;width:1691px">
<svg class="a" style="left:110px;top:3.5px" width="14" height="14" viewBox="0 0 14 14"><ellipse cx="7" cy="4" rx="3" ry="3.800" fill="#2c8fd1"/><path d="M0 13.500c.3-2.500 2-3.700 4.500-4.300l2.500 1 2.500-1c2.500.6 4.200 1.800 4.500 4.300z" fill="#2c8fd1"/></svg>
<div class="c o" style="left:126px;width:52px;border-left:1px solid #b9c2d6;border-top:1px solid #b9c2d6;top:-1px;height:22px;line-height:20px;padding-left:5.500px">Ope</div>
<div class="c o" style="left:178px;width:261px;padding-left:5.500px;">Operator maszyn obróbczych sterowanych cyfrowo</div>
<div class="c o" style="left:439px;width:113px;padding-left:5.500px;">OperatorCNC</div>
<div class="c o" style="left:552px;width:63px;padding-left:5.500px;"></div>
<div class="c o" style="left:615px;width:48px;padding-left:5.500px;"></div>
<div class="c r o" style="left:663px;width:105px;">0</div>
<div class="c o" style="left:768px;width:107px"><span class="a" style="right:5.500px;top:0;line-height:20px">2</span></div>
<div class="c r o" style="left:875px;width:71px;">2</div>
<div class="c r o" style="left:946px;width:116px;">0,0</div>
<div class="c o" style="left:1062px;width:118px"><span class="a" style="right:5.500px;top:0;line-height:20px">2,0</span></div>
<div class="c r o" style="left:1180px;width:71px;">2,0</div>
<div class="c r o" style="left:1251px;width:105px;">0</div>
<div class="c o" style="left:1356px;width:107px"><span class="a" style="right:5.500px;top:0;line-height:20px">2</span></div>
<div class="c r o" style="left:1463px;width:71px;">2</div>
<div class="c r o" style="left:1534px;width:116px;">0,0</div>
<div class="c o" style="left:1650px;width:60px;border-right:0"></div>
</div>
<div class="row" style="top:358px;width:1691px">
<svg class="a" style="left:110px;top:3.5px" width="14" height="14" viewBox="0 0 14 14"><ellipse cx="7" cy="4" rx="3" ry="3.800" fill="#2c8fd1"/><path d="M0 13.500c.3-2.500 2-3.700 4.500-4.300l2.500 1 2.500-1c2.500.6 4.200 1.800 4.500 4.300z" fill="#2c8fd1"/></svg>
<div class="c e" style="left:126px;width:52px;border-left:1px solid #b9c2d6;border-top:1px solid #b9c2d6;top:-1px;height:22px;line-height:20px;padding-left:5.500px">Kon</div>
<div class="c e" style="left:178px;width:261px;padding-left:5.500px;">Konserwator</div>
<div class="c e" style="left:439px;width:113px;padding-left:5.500px;">Konserwator</div>
<div class="c e" style="left:552px;width:63px;padding-left:5.500px;"></div>
<div class="c e" style="left:615px;width:48px;padding-left:5.500px;"></div>
<div class="c r e" style="left:663px;width:105px;">2</div>
<div class="c e" style="left:768px;width:107px"><span class="a" style="right:5.500px;top:0;line-height:20px">1</span><div class="bar" style="left:3px;width:100px"><span style="right:2.5px">1</span></div><svg class="a" style="left:5.5px;top:5px" width="13" height="11" viewBox="0 0 13 11"><path d="M6.500 0.300l6.200 10.400h-12.400z" fill="#f6a821" stroke="#f6a821" stroke-width=".6" stroke-linejoin="round"/><rect x="5.800" y="3.300" width="1.400" height="4.200" fill="#7a4a00"/><rect x="5.800" y="8.300" width="1.400" height="1.400" fill="#7a4a00"/></svg></div>
<div class="c r e" style="left:875px;width:71px;">-1</div>
<div class="c r e" style="left:946px;width:116px;">2,0</div>
<div class="c e" style="left:1062px;width:118px"><span class="a" style="right:5.500px;top:0;line-height:20px">1,0</span><div class="bar" style="left:3px;width:111px"><span style="right:2.5px">1,0</span></div><svg class="a" style="left:5.5px;top:5px" width="13" height="11" viewBox="0 0 13 11"><path d="M6.500 0.300l6.200 10.400h-12.400z" fill="#f6a821" stroke="#f6a821" stroke-width=".6" stroke-linejoin="round"/><rect x="5.800" y="3.300" width="1.400" height="4.200" fill="#7a4a00"/><rect x="5.800" y="8.300" width="1.400" height="1.400" fill="#7a4a00"/></svg></div>
<div class="c r e" style="left:1180px;width:71px;">-1,0</div>
<div class="c r e" style="left:1251px;width:105px;">2</div>
<div class="c e" style="left:1356px;width:107px"><span class="a" style="right:5.500px;top:0;line-height:20px">1</span><div class="bar" style="left:3px;width:100px"><span style="right:2.5px">1</span></div><svg class="a" style="left:5.5px;top:5px" width="13" height="11" viewBox="0 0 13 11"><path d="M6.500 0.300l6.200 10.400h-12.400z" fill="#f6a821" stroke="#f6a821" stroke-width=".6" stroke-linejoin="round"/><rect x="5.800" y="3.300" width="1.400" height="4.200" fill="#7a4a00"/><rect x="5.800" y="8.300" width="1.400" height="1.400" fill="#7a4a00"/></svg></div>
<div class="c r e" style="left:1463px;width:71px;">-1</div>
<div class="c r e" style="left:1534px;width:116px;">2,0</div>
<div class="c e" style="left:1650px;width:60px;border-right:0"><div class="bar" style="left:3px;width:111px"></div><svg class="a" style="left:5.5px;top:5px" width="13" height="11" viewBox="0 0 13 11"><path d="M6.500 0.300l6.200 10.400h-12.400z" fill="#f6a821" stroke="#f6a821" stroke-width=".6" stroke-linejoin="round"/><rect x="5.800" y="3.300" width="1.400" height="4.200" fill="#7a4a00"/><rect x="5.800" y="8.300" width="1.400" height="1.400" fill="#7a4a00"/></svg></div>
</div>
<div class="row" style="top:379px;width:1691px">
<svg class="a" style="left:77px;top:8.5px" width="8" height="6" viewBox="0 0 8 6"><path d="M0.700 1l3.300 3.500 3.300-3.500" fill="none" stroke="#2a2a2a" stroke-width="1.300"/></svg>
<div class="a" style="left:92px;top:7.0px;width:14px;height:7px;background:#fbd680;border:1px solid #eea52b;border-radius:1px"></div>
<div class="c o" style="left:108px;width:70px;border-left:1px solid #b9c2d6;border-top:1px solid #b9c2d6;top:-1px;height:22px;line-height:20px;padding-left:5.500px">Pr3</div>
<div class="c o" style="left:178px;width:261px;padding-left:5.500px;">OddziOddział produkcji 3</div>
<div class="c o" style="left:439px;width:113px;padding-left:5.500px;"></div>
<div class="c o" style="left:552px;width:63px;padding-left:5.500px;"></div>
<div class="c o" style="left:615px;width:48px;padding-left:5.500px;"></div>
<div class="c r o" style="left:663px;width:105px;">1</div>
<div class="c o" style="left:768px;width:107px"><span class="a" style="right:5.500px;top:0;line-height:20px">8</span><div class="bar" style="left:3px;width:10px"><span style="right:-87.5px">8</span></div></div>
<div class="c r o" style="left:875px;width:71px;">7</div>
<div class="c r o" style="left:946px;width:116px;">1,0</div>
<div class="c o" style="left:1062px;width:118px"><span class="a" style="right:5.500px;top:0;line-height:20px">8,0</span><div class="bar" style="left:3px;width:12px"><span style="right:-96.5px">8,0</span></div></div>
<div class="c r o" style="left:1180px;width:71px;">7,0</div>
<div class="c r o" style="left:1251px;width:105px;">0</div>
<div class="c o" style="left:1356px;width:107px"><span class="a" style="right:5.500px;top:0;line-height:20px">0</span></div>
<div class="c r o" style="left:1463px;width:71px;">0</div>
<div class="c r o" style="left:1534px;width:116px;">0,0</div>
<div class="c o" style="left:1650px;width:60px;border-right:0"></div>
</div>
<div class="row" style="top:400px;width:1691px">
<svg class="a" style="left:110px;top:3.5px" width="14" height="14" viewBox="0 0 14 14"><ellipse cx="7" cy="4" rx="3" ry="3.800" fill="#2c8fd1"/><path d="M0 13.500c.3-2.500 2-3.700 4.500-4.300l2.500 1 2.500-1c2.500.6 4.200 1.800 4.500 4.300z" fill="#2c8fd1"/></svg>
<div class="c e" style="left:126px;width:52px;border-left:1px solid #b9c2d6;border-top:1px solid #b9c2d6;top:-1px;height:22px;line-height:20px;padding-left:5.500px">Spa</div>
<div class="c e" style="left:178px;width:261px;padding-left:5.500px;">Spawacz</div>
<div class="c e" style="left:439px;width:113px;padding-left:5.500px;">StSpawacz</div>
<div class="c e" style="left:552px;width:63px;padding-left:5.500px;"></div>
<div class="c e" style="left:615px;width:48px;padding-left:5.500px;"></div>
<div class="c r e" style="left:663px;width:105px;">0</div>
<div class="c e" style="left:768px;width:107px"><span class="a" style="right:5.500px;top:0;line-height:20px">5</span></div>
<div class="c r e" style="left:875px;width:71px;">5</div>
<div class="c r e" style="left:946px;width:116px;">0,0</div>
<div class="c e" style="left:1062px;width:118px"><span class="a" style="right:5.500px;top:0;line-height:20px">5,0</span></div>
<div class="c r e" style="left:1180px;width:71px;">5,0</div>
<div class="c r e" style="left:1251px;width:105px;">0</div>
<div class="c e" style="left:1356px;width:107px"><span class="a" style="right:5.500px;top:0;line-height:20px">5</span></div>
<div class="c r e" style="left:1463px;width:71px;">5</div>
<div class="c r e" style="left:1534px;width:116px;">0,0</div>
<div class="c e" style="left:1650px;width:60px;border-right:0"></div>
</div>
<div class="row" style="top:421px;width:1691px">
<svg class="a" style="left:110px;top:3.5px" width="14" height="14" viewBox="0 0 14 14"><ellipse cx="7" cy="4" rx="3" ry="3.800" fill="#2c8fd1"/><path d="M0 13.500c.3-2.500 2-3.700 4.500-4.300l2.500 1 2.500-1c2.500.6 4.200 1.800 4.500 4.300z" fill="#2c8fd1"/></svg>
<div class="c o" style="left:126px;width:52px;border-left:1px solid #b9c2d6;border-top:1px solid #b9c2d6;top:-1px;height:22px;line-height:20px;padding-left:5.500px">Pra</div>
<div class="c o" style="left:178px;width:261px;padding-left:5.500px;">Pracownik pomocniczy produkcji</div>
<div class="c o" style="left:439px;width:113px;padding-left:5.500px;">PracownikPom</div>
<div class="c o" style="left:552px;width:63px;padding-left:5.500px;"></div>
<div class="c o" style="left:615px;width:48px;padding-left:5.500px;"></div>
<div class="c r o" style="left:663px;width:105px;">1</div>
<div class="c o" style="left:768px;width:107px"><span class="a" style="right:5.500px;top:0;line-height:20px">3</span><div class="bar" style="left:3px;width:32px"><span style="right:-65.5px">3</span></div></div>
<div class="c r o" style="left:875px;width:71px;">2</div>
<div class="c r o" style="left:946px;width:116px;">1,0</div>
<div class="c o" style="left:1062px;width:118px"><span class="a" style="right:5.500px;top:0;line-height:20px">3,0</span><div class="bar" style="left:3px;width:35px"><span style="right:-73.5px">3,0</span></div></div>
<div class="c r o" style="left:1180px;width:71px;">2,0</div>
<div class="c r o" style="left:1251px;width:105px;">1</div>
<div class="c o" style="left:1356px;width:107px"><span class="a" style="right:5.500px;top:0;line-height:20px">3</span><div class="bar" style="left:3px;width:32px"><span style="right:-65.5px">3</span></div></div>
<div class="c r o" style="left:1463px;width:71px;">2</div>
<div class="c r o" style="left:1534px;width:116px;">1,0</div>
<div class="c o" style="left:1650px;width:60px;border-right:0"><div class="bar" style="left:3px;width:35px"></div></div>
</div>
<div class="row" style="top:442px;width:1691px">
<svg class="a" style="left:59px;top:8.5px" width="8" height="6" viewBox="0 0 8 6"><path d="M0.700 1l3.300 3.500 3.300-3.500" fill="none" stroke="#2a2a2a" stroke-width="1.300"/></svg>
<div class="a" style="left:74px;top:7.0px;width:14px;height:7px;background:#fbd680;border:1px solid #eea52b;border-radius:1px"></div>
<div class="c e" style="left:90px;width:88px;border-left:1px solid #b9c2d6;border-top:1px solid #b9c2d6;top:-1px;height:22px;line-height:20px;padding-left:5.500px">Utrz</div>
<div class="c e" style="left:178px;width:261px;padding-left:5.500px;">Dział Utrzymania Ruchu</div>
<div class="c e" style="left:439px;width:113px;padding-left:5.500px;"></div>
<div class="c e" style="left:552px;width:63px;padding-left:5.500px;">550</div>
<div class="c e" style="left:615px;width:48px;padding-left:5.500px;">51</div>
<div class="c r e" style="left:663px;width:105px;">3</div>
<div class="c e" style="left:768px;width:107px"><span class="a" style="right:5.500px;top:0;line-height:20px">10</span><div class="bar" style="left:3px;width:28px"><span style="right:-69.5px">10</span></div></div>
<div class="c r e" style="left:875px;width:71px;">7</div>
<div class="c r e" style="left:946px;width:116px;">3,0</div>
<div class="c e" style="left:1062px;width:118px"><span class="a" style="right:5.500px;top:0;line-height:20px">10,0</span><div class="bar" style="left:3px;width:31px"><span style="right:-77.5px">10,0</span></div></div>
<div class="c r e" style="left:1180px;width:71px;">7,0</div>
<div class="c r e" style="left:1251px;width:105px;">0</div>
<div class="c e" style="left:1356px;width:107px"><span class="a" style="right:5.500px;top:0;line-height:20px">0</span></div>
<div class="c r e" style="left:1463px;width:71px;">0</div>
<div class="c r e" style="left:1534px;width:116px;">0,0</div>
<div class="c e" style="left:1650px;width:60px;border-right:0"></div>
</div>
<div class="row" style="top:463px;width:1691px">
<svg class="a" style="left:77px;top:8.5px" width="8" height="6" viewBox="0 0 8 6"><path d="M0.700 1l3.300 3.500 3.300-3.500" fill="none" stroke="#2a2a2a" stroke-width="1.300"/></svg>
<svg class="a" style="left:92px;top:3.5px" width="14" height="14" viewBox="0 0 14 14"><ellipse cx="7" cy="4" rx="3" ry="3.800" fill="#2c8fd1"/><path d="M0 13.500c.3-2.500 2-3.700 4.500-4.300l2.500 1 2.500-1c2.500.6 4.200 1.800 4.500 4.300z" fill="#2c8fd1"/></svg>
<div class="c o" style="left:108px;width:70px;border-left:1px solid #b9c2d6;border-top:1px solid #b9c2d6;top:-1px;height:22px;line-height:20px;padding-left:5.500px">KUtrz</div>
<div class="c o" style="left:178px;width:261px;padding-left:5.500px;">Kierownik działu Utrzymania Ruchu</div>
<div class="c o" style="left:439px;width:113px;padding-left:5.500px;">KierownikDziału</div>
<div class="c o" style="left:552px;width:63px;padding-left:5.500px;"></div>
<div class="c o" style="left:615px;width:48px;padding-left:5.500px;"></div>
<div class="c r o" style="left:663px;width:105px;">2</div>
<div class="c o" style="left:768px;width:107px"><span class="a" style="right:5.500px;top:0;line-height:20px">10</span><div class="bar" style="left:3px;width:18px"><span style="right:-79.5px">10</span></div></div>
<div class="c r o" style="left:875px;width:71px;">8</div>
<div class="c r o" style="left:946px;width:116px;">2,0</div>
<div class="c o" style="left:1062px;width:118px"><span class="a" style="right:5.500px;top:0;line-height:20px">10,0</span><div class="bar" style="left:3px;width:20px"><span style="right:-88.5px">10,0</span></div></div>
<div class="c r o" style="left:1180px;width:71px;">8,0</div>
<div class="c r o" style="left:1251px;width:105px;">1</div>
<div class="c o" style="left:1356px;width:107px"><span class="a" style="right:5.500px;top:0;line-height:20px">1</span><div class="bar" style="left:3px;width:100px"><span style="right:2.5px">1</span></div></div>
<div class="c r o" style="left:1463px;width:71px;">0</div>
<div class="c r o" style="left:1534px;width:116px;">1,0</div>
<div class="c o" style="left:1650px;width:60px;border-right:0"><div class="bar" style="left:3px;width:111px"></div></div>
</div>
<div class="row" style="top:484px;width:1691px">
<svg class="a" style="left:110px;top:3.5px" width="14" height="14" viewBox="0 0 14 14"><ellipse cx="7" cy="4" rx="3" ry="3.800" fill="#2c8fd1"/><path d="M0 13.500c.3-2.500 2-3.700 4.500-4.300l2.500 1 2.500-1c2.500.6 4.200 1.800 4.500 4.300z" fill="#2c8fd1"/></svg>
<div class="c e" style="left:126px;width:52px;border-left:1px solid #b9c2d6;border-top:1px solid #b9c2d6;top:-1px;height:22px;line-height:20px;padding-left:5.500px">Kon</div>
<div class="c e" style="left:178px;width:261px;padding-left:5.500px;">Konserwator</div>
<div class="c e" style="left:439px;width:113px;padding-left:5.500px;">Konserwator</div>
<div class="c e" style="left:552px;width:63px;padding-left:5.500px;"></div>
<div class="c e" style="left:615px;width:48px;padding-left:5.500px;"></div>
<div class="c r e" style="left:663px;width:105px;">1</div>
<div class="c e" style="left:768px;width:107px"><span class="a" style="right:5.500px;top:0;line-height:20px">4</span><div class="bar" style="left:3px;width:23px"><span style="right:-74.5px">4</span></div></div>
<div class="c r e" style="left:875px;width:71px;">3</div>
<div class="c r e" style="left:946px;width:116px;">1,0</div>
<div class="c e" style="left:1062px;width:118px"><span class="a" style="right:5.500px;top:0;line-height:20px">4,0</span><div class="bar" style="left:3px;width:26px"><span style="right:-82.5px">4,0</span></div></div>
<div class="c r e" style="left:1180px;width:71px;">3,0</div>
<div class="c r e" style="left:1251px;width:105px;">1</div>
<div class="c e" style="left:1356px;width:107px"><span class="a" style="right:5.500px;top:0;line-height:20px">4</span><div class="bar" style="left:3px;width:23px"><span style="right:-74.5px">4</span></div></div>
<div class="c r e" style="left:1463px;width:71px;">3</div>
<div class="c r e" style="left:1534px;width:116px;">1,0</div>
<div class="c e" style="left:1650px;width:60px;border-right:0"><div class="bar" style="left:3px;width:26px"></div></div>
</div>
<div class="row" style="top:505px;width:1691px">
<svg class="a" style="left:110px;top:3.5px" width="14" height="14" viewBox="0 0 14 14"><ellipse cx="7" cy="4" rx="3" ry="3.800" fill="#2c8fd1"/><path d="M0 13.500c.3-2.500 2-3.700 4.500-4.300l2.500 1 2.500-1c2.500.6 4.200 1.800 4.500 4.300z" fill="#2c8fd1"/></svg>
<div class="c o" style="left:126px;width:52px;border-left:1px solid #b9c2d6;border-top:1px solid #b9c2d6;top:-1px;height:22px;line-height:20px;padding-left:5.500px">Mec</div>
<div class="c o" style="left:178px;width:261px;padding-left:5.500px;">Mechanik</div>
<div class="c o" style="left:439px;width:113px;padding-left:5.500px;">Mechanik</div>
<div class="c o" style="left:552px;width:63px;padding-left:5.500px;"></div>
<div class="c o" style="left:615px;width:48px;padding-left:5.500px;"></div>
<div class="c r o" style="left:663px;width:105px;">0</div>
<div class="c o" style="left:768px;width:107px"><span class="a" style="right:5.500px;top:0;line-height:20px">2</span></div>
<div class="c r o" style="left:875px;width:71px;">2</div>
<div class="c r o" style="left:946px;width:116px;">0,0</div>
<div class="c o" style="left:1062px;width:118px"><span class="a" style="right:5.500px;top:0;line-height:20px">2,0</span></div>
<div class="c r o" style="left:1180px;width:71px;">2,0</div>
<div class="c r o" style="left:1251px;width:105px;">0</div>
<div class="c o" style="left:1356px;width:107px"><span class="a" style="right:5.500px;top:0;line-height:20px">2</span></div>
<div class="c r o" style="left:1463px;width:71px;">2</div>
<div class="c r o" style="left:1534px;width:116px;">0,0</div>
<div class="c o" style="left:1650px;width:60px;border-right:0"></div>
</div>
<div class="row" style="top:526px;width:1691px">
<svg class="a" style="left:110px;top:3.5px" width="14" height="14" viewBox="0 0 14 14"><ellipse cx="7" cy="4" rx="3" ry="3.800" fill="#2c8fd1"/><path d="M0 13.500c.3-2.500 2-3.700 4.500-4.300l2.500 1 2.500-1c2.500.6 4.200 1.800 4.500 4.300z" fill="#2c8fd1"/></svg>
<div class="c e" style="left:126px;width:52px;border-left:1px solid #b9c2d6;border-top:1px solid #b9c2d6;top:-1px;height:22px;line-height:20px;padding-left:5.500px">Pra</div>
<div class="c e" style="left:178px;width:261px;padding-left:5.500px;">Pracownik pomocniczy produkcji</div>
<div class="c e" style="left:439px;width:113px;padding-left:5.500px;">PracownikPom</div>
<div class="c e" style="left:552px;width:63px;padding-left:5.500px;"></div>
<div class="c e" style="left:615px;width:48px;padding-left:5.500px;"></div>
<div class="c r e" style="left:663px;width:105px;">0</div>
<div class="c e" style="left:768px;width:107px"><span class="a" style="right:5.500px;top:0;line-height:20px">3</span></div>
<div class="c r e" style="left:875px;width:71px;">3</div>
<div class="c r e" style="left:946px;width:116px;">0,0</div>
<div class="c e" style="left:1062px;width:118px"><span class="a" style="right:5.500px;top:0;line-height:20px">3,0</span></div>
<div class="c r e" style="left:1180px;width:71px;">3,0</div>
<div class="c r e" style="left:1251px;width:105px;">0</div>
<div class="c e" style="left:1356px;width:107px"><span class="a" style="right:5.500px;top:0;line-height:20px">3</span></div>
<div class="c r e" style="left:1463px;width:71px;">3</div>
<div class="c r e" style="left:1534px;width:116px;">0,0</div>
<div class="c e" style="left:1650px;width:60px;border-right:0"></div>
</div>
<div class="row" style="top:547px;width:1691px">
<svg class="a" style="left:92px;top:3.5px" width="14" height="14" viewBox="0 0 14 14"><ellipse cx="7" cy="4" rx="3" ry="3.800" fill="#2c8fd1"/><path d="M0 13.500c.3-2.500 2-3.700 4.500-4.300l2.500 1 2.500-1c2.500.6 4.200 1.800 4.500 4.300z" fill="#2c8fd1"/></svg>
<div class="c o" style="left:108px;width:70px;border-left:1px solid #b9c2d6;border-top:1px solid #b9c2d6;top:-1px;height:22px;line-height:20px;padding-left:5.500px">Kie</div>
<div class="c o" style="left:178px;width:261px;padding-left:5.500px;">Kierowca</div>
<div class="c o" style="left:439px;width:113px;padding-left:5.500px;">Kierowca</div>
<div class="c o" style="left:552px;width:63px;padding-left:5.500px;"></div>
<div class="c o" style="left:615px;width:48px;padding-left:5.500px;"></div>
<div class="c r o" style="left:663px;width:105px;">1</div>
<div class="c o" style="left:768px;width:107px"><span class="a" style="right:5.500px;top:0;line-height:20px">0</span></div>
<div class="c r o" style="left:875px;width:71px;">-1</div>
<div class="c r o" style="left:946px;width:116px;">1,0</div>
<div class="c o" style="left:1062px;width:118px"><span class="a" style="right:5.500px;top:0;line-height:20px">0,0</span></div>
<div class="c r o" style="left:1180px;width:71px;">-1,0</div>
<div class="c r o" style="left:1251px;width:105px;">1</div>
<div class="c o" style="left:1356px;width:107px"><span class="a" style="right:5.500px;top:0;line-height:20px">0</span></div>
<div class="c r o" style="left:1463px;width:71px;">-1</div>
<div class="c r o" style="left:1534px;width:116px;">1,0</div>
<div class="c o" style="left:1650px;width:60px;border-right:0"></div>
</div>
<div class="row" style="top:568px;width:1691px">
<svg class="a" style="left:59px;top:8.5px" width="8" height="6" viewBox="0 0 8 6"><path d="M0.700 1l3.300 3.500 3.300-3.500" fill="none" stroke="#2a2a2a" stroke-width="1.300"/></svg>
<div class="a" style="left:74px;top:7.0px;width:14px;height:7px;background:#fbd680;border:1px solid #eea52b;border-radius:1px"></div>
<div class="c e" style="left:90px;width:88px;border-left:1px solid #b9c2d6;border-top:1px solid #b9c2d6;top:-1px;height:22px;line-height:20px;padding-left:5.500px">KJ</div>
<div class="c e" style="left:178px;width:261px;padding-left:5.500px;">Dział Kontroli Jakości</div>
<div class="c e" style="left:439px;width:113px;padding-left:5.500px;"></div>
<div class="c e" style="left:552px;width:63px;padding-left:5.500px;"></div>
<div class="c e" style="left:615px;width:48px;padding-left:5.500px;"></div>
<div class="c r e" style="left:663px;width:105px;">1</div>
<div class="c e" style="left:768px;width:107px"><span class="a" style="right:5.500px;top:0;line-height:20px">3</span><div class="bar" style="left:3px;width:32px"><span style="right:-65.5px">3</span></div></div>
<div class="c r e" style="left:875px;width:71px;">2</div>
<div class="c r e" style="left:946px;width:116px;">1,0</div>
<div class="c e" style="left:1062px;width:118px"><span class="a" style="right:5.500px;top:0;line-height:20px">3,0</span><div class="bar" style="left:3px;width:35px"><span style="right:-73.5px">3,0</span></div></div>
<div class="c r e" style="left:1180px;width:71px;">2,0</div>
<div class="c r e" style="left:1251px;width:105px;">0</div>
<div class="c e" style="left:1356px;width:107px"><span class="a" style="right:5.500px;top:0;line-height:20px">0</span></div>
<div class="c r e" style="left:1463px;width:71px;">0</div>
<div class="c r e" style="left:1534px;width:116px;">0,0</div>
<div class="c e" style="left:1650px;width:60px;border-right:0"></div>
</div>
</div>
<div class="a" style="left:1901px;top:252px;width:2px;height:160px;background:#7f8391"></div>
<div class="a" style="left:214px;top:829px;width:1536px;height:2px;background:#8a8d96"></div>
<div class="a" style="left:213px;top:852px;width:784px;height:190px;border:1px solid #a3a9ba;background:#f8f9fc"></div>
<div class="title" style="left:214px;top:853px;width:782px;line-height:22px">Informacje o stanowisku</div>
<div class="a" style="left:214px;top:874px;width:782px;height:26px;background:linear-gradient(#dadfed,#d3d8e8)"></div>
<div class="a" style="left:214px;top:901px;width:782px;height:22px;background:#f8f9fc"></div>
<div class="hz" style="left:214px;top:900px;width:782px"></div>
<div class="hz" style="left:214px;top:922px;width:782px;background:#b0b7c9"></div>
<svg class="a" style="left:233px;top:879.5px" width="9" height="15" viewBox="0 0 9 15"><path d="M1.200 4.200v6.600a3.100 3.100 0 0 0 6.200 0v-6.600a3.100 3.100 0 0 0-6.200 0" fill="none" stroke="#1d1f27" stroke-width="1.050"/><path d="M3.300 11v-6.500a1 1 0 0 1 2 0v6" fill="none" stroke="#1d1f27" stroke-width="1"/></svg>
<div class="vl" style="left:259px;top:875px;height:47px"></div>
<div class="eq" style="left:222px;top:910px"></div>
<div class="hdr" style="left:266.5px;top:881px;max-width:14.5px;overflow:hidden">Σ</div>
<div class="vl" style="left:281px;top:875px;height:47px"></div>
<div class="hdr" style="left:287.5px;top:881px;max-width:78.5px;overflow:hidden">Obowiązuje od</div>
<div class="vl" style="left:366px;top:875px;height:47px"></div>
<div class="eq" style="left:290px;top:910px"></div>
<div class="hdr" style="left:372.5px;top:881px;max-width:100.5px;overflow:hidden">Obowiązuje do</div>
<div class="vl" style="left:473px;top:875px;height:47px"></div>
<div class="eq" style="left:375px;top:910px"></div>
<div class="hdr" style="left:479.5px;top:881px;max-width:72.5px;overflow:hidden">Symbol</div>
<div class="vl" style="left:552px;top:875px;height:47px"></div>
<svg class="a" style="left:478px;top:906px" width="17" height="11" viewBox="0 0 17 11"><rect x="4.300" y="0" width="7.300" height="11" rx="1" fill="#3f9d63"/><text x="-0.300" y="8" font-family="Liberation Mono,monospace" font-size="6.800" font-weight="bold" fill="#000" letter-spacing="0">A</text><text x="5.900" y="8" font-family="Liberation Mono,monospace" font-size="6.800" font-weight="bold" fill="#d5f0de" letter-spacing="0">B</text><text x="11.900" y="8" font-family="Liberation Mono,monospace" font-size="6.800" font-weight="bold" fill="#000" letter-spacing="0">C</text></svg>
<div class="hdr" style="left:558.5px;top:881px;max-width:52.5px;overflow:hidden">Nazwa</div>
<div class="vl" style="left:611px;top:875px;height:47px"></div>
<svg class="a" style="left:557px;top:906px" width="17" height="11" viewBox="0 0 17 11"><rect x="4.300" y="0" width="7.300" height="11" rx="1" fill="#3f9d63"/><text x="-0.300" y="8" font-family="Liberation Mono,monospace" font-size="6.800" font-weight="bold" fill="#000" letter-spacing="0">A</text><text x="5.900" y="8" font-family="Liberation Mono,monospace" font-size="6.800" font-weight="bold" fill="#d5f0de" letter-spacing="0">B</text><text x="11.900" y="8" font-family="Liberation Mono,monospace" font-size="6.800" font-weight="bold" fill="#000" letter-spacing="0">C</text></svg>
<div class="hdr" style="left:617.5px;top:881px;max-width:76.5px;overflow:hidden">Aktualnie osób</div>
<div class="vl" style="left:694px;top:875px;height:47px"></div>
<div class="eq" style="left:620px;top:910px"></div>
<div class="hdr" style="left:700.5px;top:881px;max-width:105.5px;overflow:hidden">Docelowo osób</div>
<div class="vl" style="left:806px;top:875px;height:47px"></div>
<div class="eq" style="left:703px;top:910px"></div>
<div class="hdr" style="left:812.5px;top:881px;max-width:53.5px;overflow:hidden">Brakuje</div>
<div class="vl" style="left:866px;top:875px;height:47px"></div>
<div class="eq" style="left:815px;top:910px"></div>
<div class="hdr" style="left:872.5px;top:881px;max-width:82.5px;overflow:hidden">Aktualnie etat...</div>
<div class="vl" style="left:955px;top:875px;height:47px"></div>
<div class="eq" style="left:875px;top:910px"></div>
<div class="hdr" style="left:961.5px;top:881px;max-width:34.5px;overflow:hidden">Docelowo etatów</div>
<div class="eq" style="left:964px;top:910px"></div>
<svg class="a" style="left:791px;top:884px" width="9" height="8" viewBox="0 0 9 8"><path d="M0.500 0.500h2M0.500 2.500h4M0.500 4.500h6M0.500 6.500h8" stroke="#9aa0b3" stroke-width="1"/></svg>
<div class="a" style="left:232px;top:925px;width:764px;height:21px;background:#a9b3cc"></div>
<div class="a" style="left:807px;top:925px;width:59px;height:21px;background:#ffb8b8"></div>
<div class="vl" style="left:259px;top:925px;height:21px;background:#bcc4d8"></div>
<div class="vl" style="left:281px;top:925px;height:21px;background:#bcc4d8"></div>
<div class="vl" style="left:366px;top:925px;height:21px;background:#bcc4d8"></div>
<div class="vl" style="left:473px;top:925px;height:21px;background:#bcc4d8"></div>
<div class="vl" style="left:552px;top:925px;height:21px;background:#bcc4d8"></div>
<div class="vl" style="left:611px;top:925px;height:21px;background:#bcc4d8"></div>
<div class="vl" style="left:694px;top:925px;height:21px;background:#bcc4d8"></div>
<div class="vl" style="left:806px;top:925px;height:21px;background:#bcc4d8"></div>
<div class="vl" style="left:866px;top:925px;height:21px;background:#bcc4d8"></div>
<div class="t" style="left:287.5px;top:929px">-<span style="font-size:14.500px;line-height:0;position:relative;top:0.500px;letter-spacing:0">∞</span></div>
<div class="t" style="left:372.5px;top:929px">+<span style="font-size:14.500px;line-height:0;position:relative;top:0.500px;letter-spacing:0">∞</span></div>
<div class="t" style="left:479.5px;top:929px">Mechanik</div>
<div class="t" style="left:558.5px;top:929px">Mechanik</div>
<div class="t" style="left:611px;width:78px;text-align:right;top:929px">4</div>
<div class="t" style="left:694px;width:107px;text-align:right;top:929px">2</div>
<div class="t" style="left:806px;width:55px;text-align:right;top:929px">-2</div>
<div class="t" style="left:866px;width:84px;text-align:right;top:929px">4,0</div>
<div class="tb" style="left:1126.500px;top:858px">Znajdź:</div>
<div class="a" style="left:1168px;top:854px;width:100px;height:20px;background:#fbfbfe;border:2px solid #7a55c2"></div>
<svg class="a" style="left:1252px;top:858.500px" width="14" height="13" viewBox="0 0 14 13"><path d="M5 0.500l1.500 3.200 3.400.4-2.500 2.400.6 3.500-3-1.700-3 1.700.6-3.500-2.500-2.400 3.400-.4z" fill="#f7a928"/><circle cx="9.300" cy="8.300" r="3" fill="#43a047"/><path d="M7.800 8.300l1.100 1.100 1.900-2" fill="none" stroke="#e8f5e9" stroke-width=".9"/></svg>
<div class="tb" style="left:1271px;top:858px">Nazwisko:</div>
<div class="a" style="left:1325px;top:854px;width:100px;height:20px;background:#fbfbfe;border:1px solid #a7abb8"></div>
<div class="tb" style="left:1428.500px;top:858px">Grupa zatr. na dzień:</div>
<div class="a" style="left:1536px;top:854px;width:100px;height:20px;background:#fbfbfe;border:2px solid #2a9bb8"></div>
<div class="arr" style="left:1607px;top:863px;border-width:3px 3.500px 0 3.500px;border-top-color:#222"></div>
<svg class="a" style="left:1621px;top:858.500px" width="11" height="11" viewBox="0 0 11 11"><circle cx="5.500" cy="5.500" r="5.300" fill="#595d68"/><path d="M3.500 3.500l4 4M7.500 3.500l-4 4" stroke="#f0f2f8" stroke-width="1.500"/></svg>
<div class="a" style="left:1642px;top:854px;width:20px;height:20px;background:#fbfbfe;border:1px solid #a7abb8"></div>
<svg class="a" style="left:1645px;top:857.500px" width="14" height="14" viewBox="0 0 14 14"><path d="M0.500 1h13l-5 5.500v6l-3-1.500v-4.500z" fill="#111"/></svg>
<div class="a" style="left:1665px;top:854px;width:20px;height:20px;background:#fbfbfe;border:1px solid #a7abb8"></div>
<svg class="a" style="left:1668px;top:857px" width="14" height="14" viewBox="0 0 14 14"><path d="M8 1l5 4-5 6-5-4z" fill="#e53935"/><path d="M3 7l5 4-1.500 1.500h-3.500l-2.500-2z" fill="#3b78d8"/></svg>
<div class="a" style="left:1125px;top:876px;width:781px;height:166px;border:1px solid #a3a9ba;background:#f8f9fc"></div>
<div class="title" style="left:1126px;top:877px;width:779px;line-height:21px">Zatrudnienia w okresie</div>
<div class="a" style="left:1126px;top:898px;width:779px;height:26px;background:linear-gradient(#dadfed,#d3d8e8)"></div>
<div class="hz" style="left:1126px;top:924px;width:779px;background:#b0b7c9"></div>
<svg class="a" style="left:1136px;top:903.5px" width="9" height="15" viewBox="0 0 9 15"><path d="M1.200 4.200v6.600a3.100 3.100 0 0 0 6.200 0v-6.600a3.100 3.100 0 0 0-6.200 0" fill="none" stroke="#1d1f27" stroke-width="1.050"/><path d="M3.300 11v-6.500a1 1 0 0 1 2 0v6" fill="none" stroke="#1d1f27" stroke-width="1"/></svg>
<div class="vl" style="left:1153px;top:899px;height:25px"></div>
<div class="hdr" style="left:1163.5px;top:905px">Σ</div>
<div class="vl" style="left:1181px;top:899px;height:25px"></div>
<div class="hdr" style="left:1187.5px;top:905px">Nr os...</div>
<div class="vl" style="left:1241px;top:899px;height:25px"></div>
<div class="hdr" style="left:1247.5px;top:905px">Nazwisko</div>
<div class="vl" style="left:1333px;top:899px;height:25px"></div>
<div class="hdr" style="left:1339.5px;top:905px">Imię</div>
<div class="vl" style="left:1401px;top:899px;height:25px"></div>
<div class="hdr" style="left:1407.5px;top:905px">Charakter</div>
<div class="vl" style="left:1484px;top:899px;height:25px"></div>
<div class="hdr" style="left:1490.5px;top:905px">Wzorzec ha...</div>
<div class="vl" style="left:1564px;top:899px;height:25px"></div>
<div class="hdr" style="left:1570.5px;top:905px">Grupa wzor...</div>
<div class="vl" style="left:1640px;top:899px;height:25px"></div>
<div class="hdr" style="left:1646.5px;top:905px">Stanowisko</div>
<div class="vl" style="left:1729px;top:899px;height:25px"></div>
<div class="hdr" style="left:1735.5px;top:905px">Data do</div>
<div class="vl" style="left:1802px;top:899px;height:25px"></div>
<div class="hdr" style="left:1808.5px;top:905px">Tel. komórkowy</div>
<svg class="a" style="left:1226.5px;top:907.5px" width="9" height="8" viewBox="0 0 9 8"><path d="M0.500 0.500h2M0.500 2.500h4M0.500 4.500h6M0.500 6.500h8" stroke="#9aa0b3" stroke-width="1"/></svg>
<svg class="a" style="left:1318.5px;top:907.5px" width="9" height="8" viewBox="0 0 9 8"><path d="M0.500 0.500h2M0.500 2.500h4M0.500 4.500h6M0.500 6.500h8" stroke="#9aa0b3" stroke-width="1"/></svg>
<svg class="a" style="left:1386.5px;top:907.5px" width="9" height="8" viewBox="0 0 9 8"><path d="M0.500 0.500h2M0.500 2.500h4M0.500 4.500h6M0.500 6.500h8" stroke="#9aa0b3" stroke-width="1"/></svg>
<div class="a" style="left:1126px;top:925px;width:779px;height:21px;background:#a9b3cc;border-bottom:1px solid #b9c2d6"></div>
<div class="vl" style="left:1153px;top:925px;height:21px;background:#bcc4d8"></div>
<div class="vl" style="left:1181px;top:925px;height:21px;background:#bcc4d8"></div>
<div class="vl" style="left:1241px;top:925px;height:21px;background:#bcc4d8"></div>
<div class="vl" style="left:1333px;top:925px;height:21px;background:#bcc4d8"></div>
<div class="vl" style="left:1401px;top:925px;height:21px;background:#bcc4d8"></div>
<div class="vl" style="left:1484px;top:925px;height:21px;background:#bcc4d8"></div>
<div class="vl" style="left:1564px;top:925px;height:21px;background:#bcc4d8"></div>
<div class="vl" style="left:1640px;top:925px;height:21px;background:#bcc4d8"></div>
<div class="vl" style="left:1729px;top:925px;height:21px;background:#bcc4d8"></div>
<div class="vl" style="left:1802px;top:925px;height:21px;background:#bcc4d8"></div>
<div class="t" style="left:1187.5px;top:929px">L00088</div>
<div class="t" style="left:1247.5px;top:929px">Cala</div>
<div class="t" style="left:1339.5px;top:929px">Wojciech</div>
<div class="t" style="left:1407.5px;top:929px">Zlec</div>
<div class="t" style="left:1646.5px;top:929px">Mechanik</div>
<div class="t" style="left:1735.5px;top:929px">+<span style="font-size:14.500px;line-height:0;position:relative;top:0.500px;letter-spacing:0">∞</span></div>
<div class="a" style="left:1126px;top:946px;width:779px;height:21px;background:#f6f7fc;border-bottom:1px solid #b9c2d6"></div>
<div class="vl" style="left:1153px;top:946px;height:21px;background:#bcc4d8"></div>
<div class="vl" style="left:1181px;top:946px;height:21px;background:#bcc4d8"></div>
<div class="vl" style="left:1241px;top:946px;height:21px;background:#bcc4d8"></div>
<div class="vl" style="left:1333px;top:946px;height:21px;background:#bcc4d8"></div>
<div class="vl" style="left:1401px;top:946px;height:21px;background:#bcc4d8"></div>
<div class="vl" style="left:1484px;top:946px;height:21px;background:#bcc4d8"></div>
<div class="vl" style="left:1564px;top:946px;height:21px;background:#bcc4d8"></div>
<div class="vl" style="left:1640px;top:946px;height:21px;background:#bcc4d8"></div>
<div class="vl" style="left:1729px;top:946px;height:21px;background:#bcc4d8"></div>
<div class="vl" style="left:1802px;top:946px;height:21px;background:#bcc4d8"></div>
<div class="t" style="left:1187.5px;top:950px">L00065</div>
<div class="t" style="left:1247.5px;top:950px">Salvia</div>
<div class="t" style="left:1339.5px;top:950px">Joachim</div>
<div class="t" style="left:1407.5px;top:950px">Zlec</div>
<div class="t lnk" style="left:1646.5px;top:950px">Mechanik</div>
<div class="t" style="left:1735.5px;top:950px">+<span style="font-size:14.500px;line-height:0;position:relative;top:0.500px;letter-spacing:0">∞</span></div>
<div class="a" style="left:1126px;top:967px;width:779px;height:21px;background:#e6effb;border-bottom:1px solid #b9c2d6"></div>
<div class="vl" style="left:1153px;top:967px;height:21px;background:#bcc4d8"></div>
<div class="vl" style="left:1181px;top:967px;height:21px;background:#bcc4d8"></div>
<div class="vl" style="left:1241px;top:967px;height:21px;background:#bcc4d8"></div>
<div class="vl" style="left:1333px;top:967px;height:21px;background:#bcc4d8"></div>
<div class="vl" style="left:1401px;top:967px;height:21px;background:#bcc4d8"></div>
<div class="vl" style="left:1484px;top:967px;height:21px;background:#bcc4d8"></div>
<div class="vl" style="left:1564px;top:967px;height:21px;background:#bcc4d8"></div>
<div class="vl" style="left:1640px;top:967px;height:21px;background:#bcc4d8"></div>
<div class="vl" style="left:1729px;top:967px;height:21px;background:#bcc4d8"></div>
<div class="vl" style="left:1802px;top:967px;height:21px;background:#bcc4d8"></div>
<div class="t" style="left:1187.5px;top:971px">L00085</div>
<div class="t" style="left:1247.5px;top:971px">Solan</div>
<div class="t" style="left:1339.5px;top:971px">Piotr</div>
<div class="t" style="left:1407.5px;top:971px">Prac</div>
<div class="t lnk" style="left:1490.5px;top:971px">1zm</div>
<div class="t lnk" style="left:1570.5px;top:971px">A</div>
<div class="t lnk" style="left:1646.5px;top:971px">Mechanik</div>
<div class="t" style="left:1735.5px;top:971px">+<span style="font-size:14.500px;line-height:0;position:relative;top:0.500px;letter-spacing:0">∞</span></div>
<div class="t" style="left:1808.5px;top:971px">434123123</div>
<div class="a" style="left:1126px;top:988px;width:779px;height:21px;background:#f6f7fc;border-bottom:1px solid #b9c2d6"></div>
<div class="vl" style="left:1153px;top:988px;height:21px;background:#bcc4d8"></div>
<div class="vl" style="left:1181px;top:988px;height:21px;background:#bcc4d8"></div>
<div class="vl" style="left:1241px;top:988px;height:21px;background:#bcc4d8"></div>
<div class="vl" style="left:1333px;top:988px;height:21px;background:#bcc4d8"></div>
<div class="vl" style="left:1401px;top:988px;height:21px;background:#bcc4d8"></div>
<div class="vl" style="left:1484px;top:988px;height:21px;background:#bcc4d8"></div>
<div class="vl" style="left:1564px;top:988px;height:21px;background:#bcc4d8"></div>
<div class="vl" style="left:1640px;top:988px;height:21px;background:#bcc4d8"></div>
<div class="vl" style="left:1729px;top:988px;height:21px;background:#bcc4d8"></div>
<div class="vl" style="left:1802px;top:988px;height:21px;background:#bcc4d8"></div>
<div class="t" style="left:1187.5px;top:992px">L00104</div>
<div class="t" style="left:1247.5px;top:992px">Wetulus</div>
<div class="t" style="left:1339.5px;top:992px">Mariusz</div>
<div class="t" style="left:1407.5px;top:992px">Prac</div>
<div class="t lnk" style="left:1490.5px;top:992px">2zm</div>
<div class="t lnk" style="left:1570.5px;top:992px">A</div>
<div class="t lnk" style="left:1646.5px;top:992px">Mechanik</div>
<div class="t" style="left:1735.5px;top:992px">+<span style="font-size:14.500px;line-height:0;position:relative;top:0.500px;letter-spacing:0">∞</span></div>
<div class="t" style="left:1808.5px;top:992px">654123123</div>
</body></html>
